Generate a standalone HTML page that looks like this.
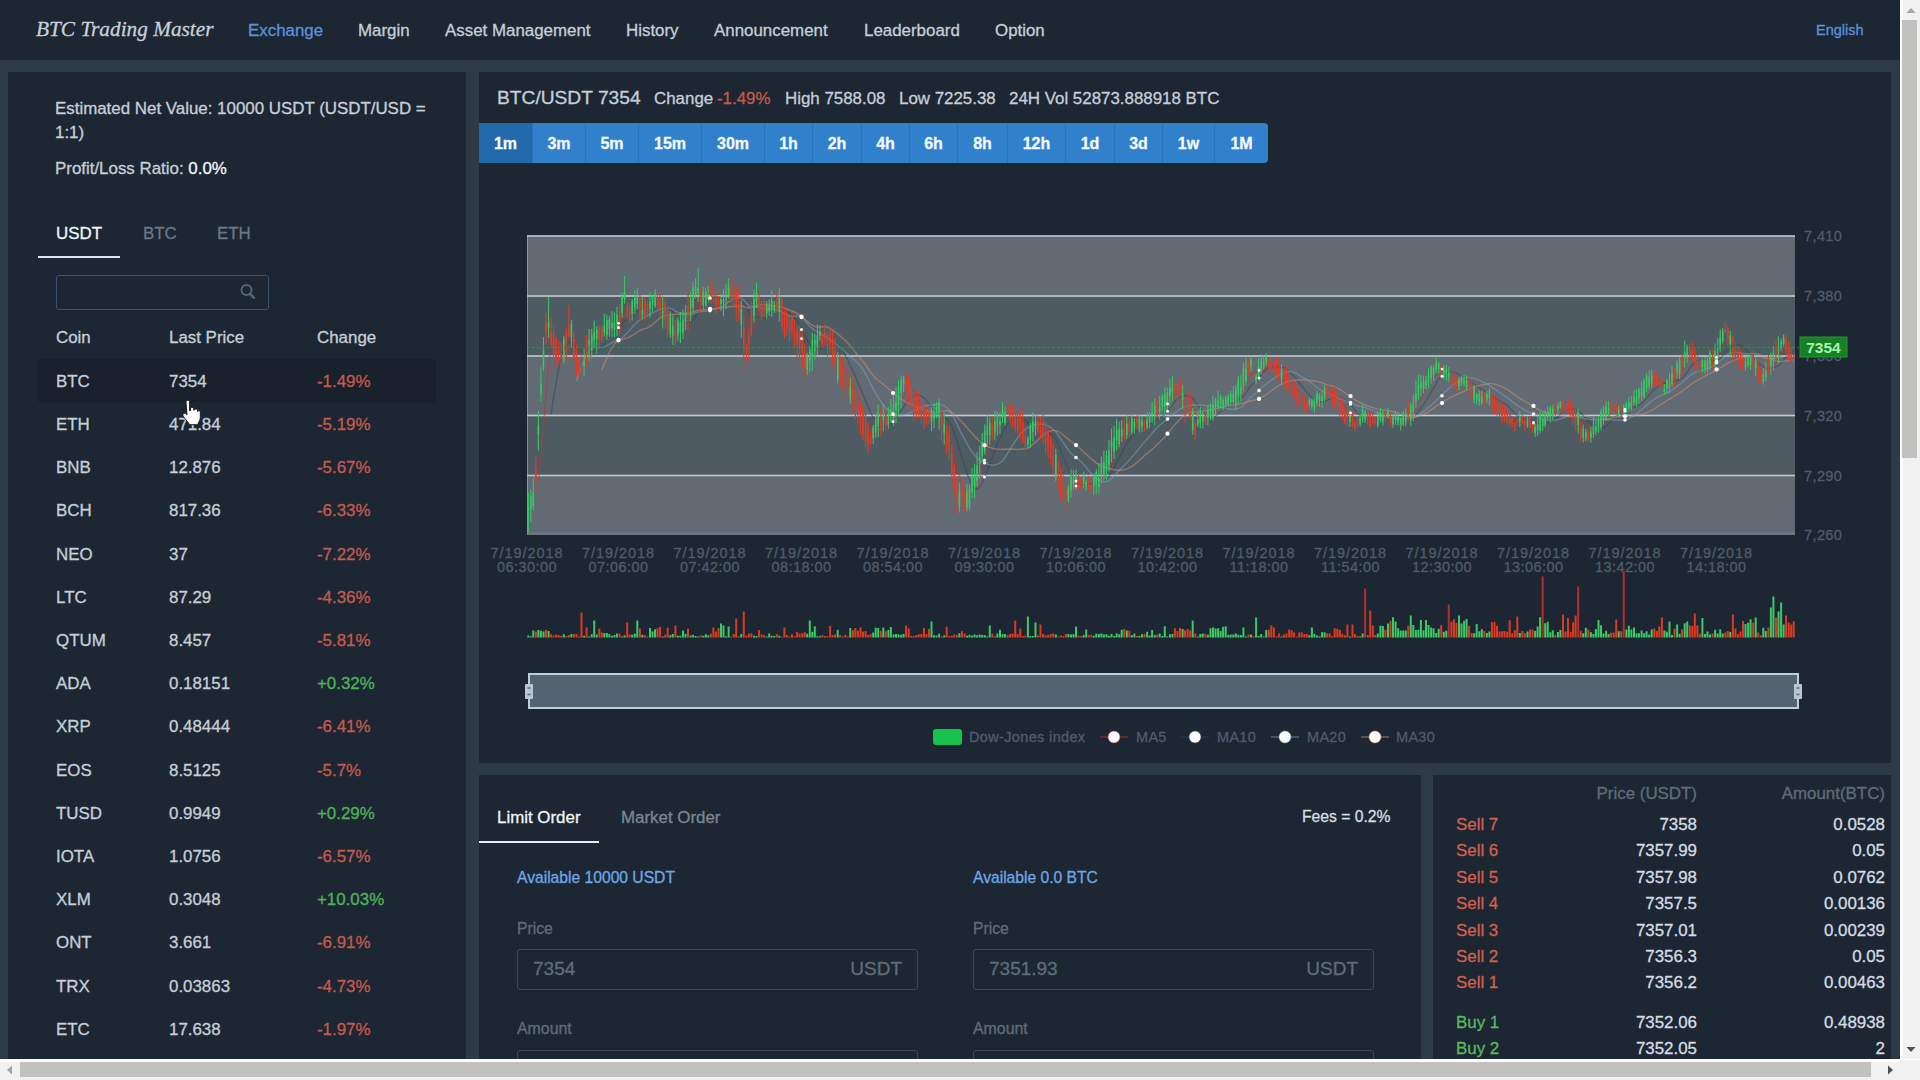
<!DOCTYPE html>
<html lang="en">
<head>
<meta charset="utf-8">
<title>BTC Trading Master</title>
<style>
*{box-sizing:border-box;margin:0;padding:0}
html,body{width:1920px;height:1080px;overflow:hidden;background:#2d3b46;font-family:"Liberation Sans",sans-serif;color:#c6cfd9;font-size:16.9px;-webkit-text-stroke:0.3px}
.abs{position:absolute}
.t{position:absolute;white-space:nowrap;line-height:20px;height:20px;margin-top:1px}
#page{position:absolute;left:0;top:0;width:1901px;height:1060px;overflow:hidden;background:#2d3b46}
#nav{position:absolute;left:0;top:0;width:1900px;height:60px;background:#1c2733}
.panel{position:absolute;background:#1d2733}
.red{color:#c55a4e}
.grn{color:#4eb35a}
.dim{color:#5f6d7b}
.blue{color:#6ea6e6}
.w{color:#f2f5f8}
.btn{position:absolute;top:0;height:40px;line-height:41px;text-align:center;color:#f4f8fc;font-weight:bold;font-size:16px;border-right:1px solid #2a72b8}
.inp{position:absolute;height:41px;border:1px solid #3a4a5e;border-radius:3px}
.inp span{position:absolute;top:8px;font-size:19px;line-height:22px;color:#5f6d7b}
.r{text-align:right}
</style>
</head>
<body>
<div id="page">
<div id="nav">
<div class="t" style="left:36px;top:16px;font-family:'Liberation Serif',serif;font-style:italic;font-size:21.3px;line-height:24px;height:24px;color:#c9d0da">BTC Trading Master</div>
<div class="t" style="left:248px;top:20px;color:#5b92da">Exchange</div>
<div class="t" style="left:358px;top:20px">Margin</div>
<div class="t" style="left:445px;top:20px">Asset Management</div>
<div class="t" style="left:626px;top:20px">History</div>
<div class="t" style="left:714px;top:20px">Announcement</div>
<div class="t" style="left:864px;top:20px">Leaderboard</div>
<div class="t" style="left:995px;top:20px">Option</div>
<div class="t" style="left:1816px;top:19px;font-size:14.5px;color:#5b92da">English</div>
</div>
<div class="panel" style="left:8px;top:72px;width:458px;height:1000px">
<div class="t " style="left:47px;top:26.0px;">Estimated Net Value: 10000 USDT (USDT/USD =</div>
<div class="t " style="left:47px;top:50.0px;">1:1)</div>
<div class="t " style="left:47px;top:86.0px;">Profit/Loss Ratio: <span class="w">0.0%</span></div>
<div class="t w" style="left:48px;top:151.0px;">USDT</div>
<div class="t " style="left:135px;top:151.0px;color:#6b7886">BTC</div>
<div class="t " style="left:209px;top:151.0px;color:#6b7886">ETH</div>
<div class="abs" style="left:30px;top:184px;width:82px;height:2px;background:#dfe5eb"></div>
<div class="abs" style="left:48px;top:203px;width:213px;height:35px;border:1px solid #3c5274;border-radius:3px"></div>
<svg class="abs" style="left:230px;top:210px" width="20" height="20" viewBox="0 0 20 20"><circle cx="8.5" cy="8" r="5" fill="none" stroke="#53657c" stroke-width="2"/><path d="M12 11.8 L16 15.8" stroke="#53657c" stroke-width="2.4" stroke-linecap="round"/></svg>
<div class="t " style="left:48px;top:255.0px;">Coin</div>
<div class="t " style="left:161px;top:255.0px;">Last Price</div>
<div class="t " style="left:309px;top:255.0px;">Change</div>
<div class="abs" style="left:30px;top:287px;width:398px;height:43px;background:#18212c"></div>
<div class="t " style="left:48px;top:298.8px;">BTC</div>
<div class="t " style="left:161px;top:298.8px;">7354</div>
<div class="t red" style="left:309px;top:298.8px;">-1.49%</div>
<div class="t " style="left:48px;top:342.0px;">ETH</div>
<div class="t " style="left:161px;top:342.0px;">471.84</div>
<div class="t red" style="left:309px;top:342.0px;">-5.19%</div>
<div class="t " style="left:48px;top:385.2px;">BNB</div>
<div class="t " style="left:161px;top:385.2px;">12.876</div>
<div class="t red" style="left:309px;top:385.2px;">-5.67%</div>
<div class="t " style="left:48px;top:428.4px;">BCH</div>
<div class="t " style="left:161px;top:428.4px;">817.36</div>
<div class="t red" style="left:309px;top:428.4px;">-6.33%</div>
<div class="t " style="left:48px;top:471.6px;">NEO</div>
<div class="t " style="left:161px;top:471.6px;">37</div>
<div class="t red" style="left:309px;top:471.6px;">-7.22%</div>
<div class="t " style="left:48px;top:514.8px;">LTC</div>
<div class="t " style="left:161px;top:514.8px;">87.29</div>
<div class="t red" style="left:309px;top:514.8px;">-4.36%</div>
<div class="t " style="left:48px;top:558.0px;">QTUM</div>
<div class="t " style="left:161px;top:558.0px;">8.457</div>
<div class="t red" style="left:309px;top:558.0px;">-5.81%</div>
<div class="t " style="left:48px;top:601.2px;">ADA</div>
<div class="t " style="left:161px;top:601.2px;">0.18151</div>
<div class="t grn" style="left:309px;top:601.2px;">+0.32%</div>
<div class="t " style="left:48px;top:644.4px;">XRP</div>
<div class="t " style="left:161px;top:644.4px;">0.48444</div>
<div class="t red" style="left:309px;top:644.4px;">-6.41%</div>
<div class="t " style="left:48px;top:687.6px;">EOS</div>
<div class="t " style="left:161px;top:687.6px;">8.5125</div>
<div class="t red" style="left:309px;top:687.6px;">-5.7%</div>
<div class="t " style="left:48px;top:730.8px;">TUSD</div>
<div class="t " style="left:161px;top:730.8px;">0.9949</div>
<div class="t grn" style="left:309px;top:730.8px;">+0.29%</div>
<div class="t " style="left:48px;top:774.0px;">IOTA</div>
<div class="t " style="left:161px;top:774.0px;">1.0756</div>
<div class="t red" style="left:309px;top:774.0px;">-6.57%</div>
<div class="t " style="left:48px;top:817.2px;">XLM</div>
<div class="t " style="left:161px;top:817.2px;">0.3048</div>
<div class="t grn" style="left:309px;top:817.2px;">+10.03%</div>
<div class="t " style="left:48px;top:860.4px;">ONT</div>
<div class="t " style="left:161px;top:860.4px;">3.661</div>
<div class="t red" style="left:309px;top:860.4px;">-6.91%</div>
<div class="t " style="left:48px;top:903.6px;">TRX</div>
<div class="t " style="left:161px;top:903.6px;">0.03863</div>
<div class="t red" style="left:309px;top:903.6px;">-4.73%</div>
<div class="t " style="left:48px;top:946.8px;">ETC</div>
<div class="t " style="left:161px;top:946.8px;">17.638</div>
<div class="t red" style="left:309px;top:946.8px;">-1.97%</div>
</div>
<svg class="abs" style="left:180px;top:399px" width="24" height="30" viewBox="0 0 24 32" preserveAspectRatio="none"><path d="M6 3.2c0-1.1.8-1.9 1.8-1.9s1.8.8 1.8 1.9v9.3l.9-.1v-1.7c0-1 .7-1.7 1.6-1.7s1.6.7 1.6 1.7v1.2l.6 0c.2-.8.8-1.3 1.6-1.3.9 0 1.6.7 1.6 1.7v1c.2-.5.7-.8 1.3-.8.9 0 1.5.7 1.5 1.7v5.6c0 1.7-.4 3.1-1.2 4.400l-1 1.700v1.500h-9.300v-1.500l-4.100-5.400c-1-1.300-1.800-2.600-1.800-3.600 0-1 .8-1.600 1.700-1.600.7 0 1.300.3 1.900.9l.5.600z" fill="#fff" stroke="#1a1a1a" stroke-width="1"/></svg>
<div class="panel" id="chartp" style="left:479px;top:72px;width:1412px;height:691px">
<div class="t " style="left:18px;top:15.0px;font-size:19.2px;line-height:24px;height:24px;margin-top:-1px">BTC/USDT 7354</div>
<div class="t " style="left:175px;top:16.0px;">Change</div>
<div class="t red" style="left:238px;top:16.0px;">-1.49%</div>
<div class="t " style="left:306px;top:16.0px;">High 7588.08</div>
<div class="t " style="left:420px;top:16.0px;">Low 7225.38</div>
<div class="t " style="left:530px;top:16.0px;">24H Vol 52873.888918 BTC</div>
<div class="abs" style="left:0;top:51px;width:789px;height:40px;background:#3080cc;border-radius:0 4px 4px 0;overflow:hidden">
<div class="btn" style="left:0px;width:54px;background:#236aad;">1m</div>
<div class="btn" style="left:54px;width:53px;">3m</div>
<div class="btn" style="left:107px;width:53px;">5m</div>
<div class="btn" style="left:160px;width:63px;">15m</div>
<div class="btn" style="left:223px;width:63px;">30m</div>
<div class="btn" style="left:286px;width:48px;">1h</div>
<div class="btn" style="left:334px;width:49px;">2h</div>
<div class="btn" style="left:383px;width:48px;">4h</div>
<div class="btn" style="left:431px;width:48px;">6h</div>
<div class="btn" style="left:479px;width:50px;">8h</div>
<div class="btn" style="left:529px;width:58px;">12h</div>
<div class="btn" style="left:587px;width:49px;">1d</div>
<div class="btn" style="left:636px;width:48px;">3d</div>
<div class="btn" style="left:684px;width:52px;">1w</div>
<div class="btn" style="left:736px;width:53px;border-right:none;">1M</div>
</div>
<svg class="abs" style="left:0;top:0" width="1411" height="691" viewBox="0 0 1411 691" font-family="Liberation Sans, sans-serif">
<rect x="48.0" y="164.0" width="1268.0" height="60.0" fill="#626a74"/>
<rect x="48.0" y="224.0" width="1268.0" height="60.0" fill="#4f5b62"/>
<rect x="48.0" y="284.0" width="1268.0" height="59.5" fill="#626a74"/>
<rect x="48.0" y="343.5" width="1268.0" height="60.0" fill="#4f5b62"/>
<rect x="48.0" y="403.5" width="1268.0" height="59.5" fill="#626a74"/>
<rect x="48.0" y="163.2" width="1268.0" height="1.6" fill="#c3cbd2"/>
<rect x="48.0" y="223.2" width="1268.0" height="1.6" fill="#c3cbd2"/>
<rect x="48.0" y="283.2" width="1268.0" height="1.6" fill="#c3cbd2"/>
<rect x="48.0" y="342.7" width="1268.0" height="1.6" fill="#c3cbd2"/>
<rect x="48.0" y="402.7" width="1268.0" height="1.6" fill="#c3cbd2"/>
<rect x="48.0" y="164.0" width="1" height="299" fill="#aeb8c2" opacity="0.55"/>
<rect x="48.0" y="460.5" width="1268.0" height="2" fill="#7b8692" opacity="0.6"/>
<text x="1325.0" y="169.0" font-size="14.5" fill="#4f5d6b" stroke="#4f5d6b" stroke-width="0.3" letter-spacing="0.4">7,410</text>
<text x="1325.0" y="229.0" font-size="14.5" fill="#4f5d6b" stroke="#4f5d6b" stroke-width="0.3" letter-spacing="0.4">7,380</text>
<text x="1325.0" y="289.0" font-size="14.5" fill="#4f5d6b" stroke="#4f5d6b" stroke-width="0.3" letter-spacing="0.4">7,350</text>
<text x="1325.0" y="348.5" font-size="14.5" fill="#4f5d6b" stroke="#4f5d6b" stroke-width="0.3" letter-spacing="0.4">7,320</text>
<text x="1325.0" y="408.5" font-size="14.5" fill="#4f5d6b" stroke="#4f5d6b" stroke-width="0.3" letter-spacing="0.4">7,290</text>
<text x="1325.0" y="468.0" font-size="14.5" fill="#4f5d6b" stroke="#4f5d6b" stroke-width="0.3" letter-spacing="0.4">7,260</text>
<text x="48.0" y="486.0" font-size="14.5" fill="#4f5d6b" stroke="#4f5d6b" stroke-width="0.3" text-anchor="middle" letter-spacing="0.95">7/19/2018</text>
<text x="48.0" y="500.0" font-size="14.5" fill="#4f5d6b" stroke="#4f5d6b" stroke-width="0.3" text-anchor="middle" letter-spacing="0.45">06:30:00</text>
<text x="139.5" y="486.0" font-size="14.5" fill="#4f5d6b" stroke="#4f5d6b" stroke-width="0.3" text-anchor="middle" letter-spacing="0.95">7/19/2018</text>
<text x="139.5" y="500.0" font-size="14.5" fill="#4f5d6b" stroke="#4f5d6b" stroke-width="0.3" text-anchor="middle" letter-spacing="0.45">07:06:00</text>
<text x="231.0" y="486.0" font-size="14.5" fill="#4f5d6b" stroke="#4f5d6b" stroke-width="0.3" text-anchor="middle" letter-spacing="0.95">7/19/2018</text>
<text x="231.0" y="500.0" font-size="14.5" fill="#4f5d6b" stroke="#4f5d6b" stroke-width="0.3" text-anchor="middle" letter-spacing="0.45">07:42:00</text>
<text x="322.5" y="486.0" font-size="14.5" fill="#4f5d6b" stroke="#4f5d6b" stroke-width="0.3" text-anchor="middle" letter-spacing="0.95">7/19/2018</text>
<text x="322.5" y="500.0" font-size="14.5" fill="#4f5d6b" stroke="#4f5d6b" stroke-width="0.3" text-anchor="middle" letter-spacing="0.45">08:18:00</text>
<text x="414.0" y="486.0" font-size="14.5" fill="#4f5d6b" stroke="#4f5d6b" stroke-width="0.3" text-anchor="middle" letter-spacing="0.95">7/19/2018</text>
<text x="414.0" y="500.0" font-size="14.5" fill="#4f5d6b" stroke="#4f5d6b" stroke-width="0.3" text-anchor="middle" letter-spacing="0.45">08:54:00</text>
<text x="505.5" y="486.0" font-size="14.5" fill="#4f5d6b" stroke="#4f5d6b" stroke-width="0.3" text-anchor="middle" letter-spacing="0.95">7/19/2018</text>
<text x="505.5" y="500.0" font-size="14.5" fill="#4f5d6b" stroke="#4f5d6b" stroke-width="0.3" text-anchor="middle" letter-spacing="0.45">09:30:00</text>
<text x="597.0" y="486.0" font-size="14.5" fill="#4f5d6b" stroke="#4f5d6b" stroke-width="0.3" text-anchor="middle" letter-spacing="0.95">7/19/2018</text>
<text x="597.0" y="500.0" font-size="14.5" fill="#4f5d6b" stroke="#4f5d6b" stroke-width="0.3" text-anchor="middle" letter-spacing="0.45">10:06:00</text>
<text x="688.5" y="486.0" font-size="14.5" fill="#4f5d6b" stroke="#4f5d6b" stroke-width="0.3" text-anchor="middle" letter-spacing="0.95">7/19/2018</text>
<text x="688.5" y="500.0" font-size="14.5" fill="#4f5d6b" stroke="#4f5d6b" stroke-width="0.3" text-anchor="middle" letter-spacing="0.45">10:42:00</text>
<text x="780.0" y="486.0" font-size="14.5" fill="#4f5d6b" stroke="#4f5d6b" stroke-width="0.3" text-anchor="middle" letter-spacing="0.95">7/19/2018</text>
<text x="780.0" y="500.0" font-size="14.5" fill="#4f5d6b" stroke="#4f5d6b" stroke-width="0.3" text-anchor="middle" letter-spacing="0.45">11:18:00</text>
<text x="871.5" y="486.0" font-size="14.5" fill="#4f5d6b" stroke="#4f5d6b" stroke-width="0.3" text-anchor="middle" letter-spacing="0.95">7/19/2018</text>
<text x="871.5" y="500.0" font-size="14.5" fill="#4f5d6b" stroke="#4f5d6b" stroke-width="0.3" text-anchor="middle" letter-spacing="0.45">11:54:00</text>
<text x="963.0" y="486.0" font-size="14.5" fill="#4f5d6b" stroke="#4f5d6b" stroke-width="0.3" text-anchor="middle" letter-spacing="0.95">7/19/2018</text>
<text x="963.0" y="500.0" font-size="14.5" fill="#4f5d6b" stroke="#4f5d6b" stroke-width="0.3" text-anchor="middle" letter-spacing="0.45">12:30:00</text>
<text x="1054.5" y="486.0" font-size="14.5" fill="#4f5d6b" stroke="#4f5d6b" stroke-width="0.3" text-anchor="middle" letter-spacing="0.95">7/19/2018</text>
<text x="1054.5" y="500.0" font-size="14.5" fill="#4f5d6b" stroke="#4f5d6b" stroke-width="0.3" text-anchor="middle" letter-spacing="0.45">13:06:00</text>
<text x="1146.0" y="486.0" font-size="14.5" fill="#4f5d6b" stroke="#4f5d6b" stroke-width="0.3" text-anchor="middle" letter-spacing="0.95">7/19/2018</text>
<text x="1146.0" y="500.0" font-size="14.5" fill="#4f5d6b" stroke="#4f5d6b" stroke-width="0.3" text-anchor="middle" letter-spacing="0.45">13:42:00</text>
<text x="1237.5" y="486.0" font-size="14.5" fill="#4f5d6b" stroke="#4f5d6b" stroke-width="0.3" text-anchor="middle" letter-spacing="0.95">7/19/2018</text>
<text x="1237.5" y="500.0" font-size="14.5" fill="#4f5d6b" stroke="#4f5d6b" stroke-width="0.3" text-anchor="middle" letter-spacing="0.45">14:18:00</text>
<path d="M59.4 409.5L61.9 385.2L64.5 355.8L67.0 323.1L69.6 294.0L72.1 274.7L74.6 266.2L77.2 265.2L79.7 269.3L82.2 275.7L84.8 279.2L87.3 279.3L89.8 275.3L92.4 272.1L94.9 270.3L97.5 271.9L100.0 276.6L102.5 284.3L105.1 289.8L107.6 290.0L110.1 287.2L112.7 281.8L115.2 274.8L117.7 269.8L120.3 266.6L122.8 264.1L125.3 261.5L127.9 259.6L130.4 257.2L133.0 255.6L135.5 254.0L138.0 252.8L140.6 251.3L143.1 247.4L145.6 241.9L148.2 238.8L150.7 237.1L153.2 235.5L155.8 235.1L158.3 235.7L160.9 235.2L163.4 234.7L165.9 234.4L168.5 235.3L171.0 236.5L173.5 235.7L176.1 233.6L178.6 232.2L181.1 231.1L183.7 232.2L186.2 234.9L188.7 238.5L191.3 243.1L193.8 248.1L196.4 252.3L198.9 254.6L201.4 256.3L204.0 255.8L206.5 253.8L209.0 249.4L211.6 244.9L214.1 238.7L216.6 232.3L219.2 226.7L221.7 223.9L224.3 223.0L226.8 223.9L229.3 225.3L231.9 225.9L234.4 225.3L236.9 225.6L239.5 226.0L242.0 226.7L244.5 228.1L247.1 228.4L249.6 225.9L252.1 223.8L254.7 222.7L257.2 223.0L259.8 224.6L262.3 230.3L264.8 239.0L267.4 249.8L269.9 257.9L272.4 261.3L275.0 258.4L277.5 251.1L280.0 241.7L282.6 234.9L285.1 231.9L287.7 233.0L290.2 235.3L292.7 235.4L295.3 235.1L297.8 234.4L300.3 233.8L302.9 235.2L305.4 239.6L307.9 243.3L310.5 248.4L313.0 252.8L315.5 255.9L318.1 258.8L320.6 262.4L323.2 266.7L325.7 273.5L328.2 280.1L330.8 283.6L333.3 285.0L335.8 284.3L338.4 279.7L340.9 273.2L343.4 269.4L346.0 266.4L348.5 265.5L351.1 266.1L353.6 269.2L356.1 273.2L358.7 279.0L361.2 284.7L363.7 291.4L366.3 297.5L368.8 302.9L371.3 308.0L373.9 312.7L376.4 317.9L378.9 323.8L381.5 330.2L384.0 337.2L386.6 344.3L389.1 351.6L391.6 357.4L394.2 361.0L396.7 361.3L399.2 359.5L401.8 356.4L404.3 352.3L406.8 348.8L409.4 347.4L411.9 345.2L414.5 342.7L417.0 339.9L419.5 335.6L422.1 329.7L424.6 324.4L427.1 319.1L429.7 315.9L432.2 315.1L434.7 318.0L437.3 322.3L439.8 327.3L442.3 332.1L444.9 336.5L447.4 339.3L450.0 341.3L452.5 343.4L455.0 344.0L457.6 342.9L460.1 342.4L462.6 343.5L465.2 345.4L467.7 350.1L470.2 357.0L472.8 366.5L475.3 378.3L477.9 391.7L480.4 403.3L482.9 412.8L485.5 420.3L488.0 423.8L490.5 424.1L493.1 421.8L495.6 419.6L498.1 414.1L500.7 406.5L503.2 397.1L505.7 388.2L508.3 378.4L510.8 369.7L513.4 363.7L515.9 359.1L518.4 355.2L521.0 353.6L523.5 350.7L526.0 348.0L528.6 345.0L531.1 343.2L533.6 341.8L536.2 342.7L538.7 344.3L541.3 346.7L543.8 350.1L546.3 354.7L548.9 359.1L551.4 361.4L553.9 362.1L556.5 361.8L559.0 358.7L561.5 356.1L564.1 355.2L566.6 357.3L569.1 359.9L571.7 365.4L574.2 372.0L576.8 378.9L579.3 386.8L581.8 395.6L584.4 404.0L586.9 410.7L589.4 416.5L592.0 418.0L594.5 417.0L597.0 414.1L599.6 411.2L602.1 409.1L604.7 408.3L607.2 409.3L609.7 410.9L612.3 412.4L614.8 412.6L617.3 412.8L619.9 411.6L622.4 408.8L624.9 404.9L627.5 400.9L630.0 395.8L632.5 389.2L635.1 383.4L637.6 376.9L640.2 371.2L642.7 366.6L645.2 363.1L647.8 359.8L650.3 358.2L652.8 355.8L655.4 354.2L657.9 352.8L660.4 352.2L663.0 351.8L665.5 352.1L668.1 351.3L670.6 351.2L673.1 349.1L675.7 346.5L678.2 342.8L680.7 340.7L683.3 337.2L685.8 334.9L688.3 331.9L690.9 329.1L693.4 324.8L695.9 321.9L698.5 319.9L701.0 318.2L703.6 318.8L706.1 323.0L708.6 325.3L711.2 328.5L713.7 334.7L716.2 341.5L718.8 343.9L721.3 347.6L723.8 349.9L726.4 349.1L728.9 345.5L731.5 343.6L734.0 341.5L736.5 338.5L739.1 335.6L741.6 333.6L744.1 332.3L746.7 330.9L749.2 330.2L751.7 329.8L754.3 328.7L756.8 327.5L759.3 325.4L761.9 322.9L764.4 318.3L767.0 313.7L769.5 306.9L772.0 301.5L774.6 299.4L777.1 299.5L779.6 298.4L782.2 298.7L784.7 298.4L787.2 295.3L789.8 292.7L792.3 292.1L794.9 292.2L797.4 293.0L799.9 295.0L802.5 296.9L805.0 299.3L807.5 301.3L810.1 305.1L812.6 308.9L815.1 312.3L817.7 315.8L820.2 320.7L822.7 323.0L825.3 325.6L827.8 328.9L830.4 330.4L832.9 331.2L835.4 332.8L838.0 332.1L840.5 330.4L843.0 329.4L845.6 326.9L848.1 324.1L850.6 322.2L853.2 321.3L855.7 321.4L858.3 323.4L860.8 326.2L863.3 330.2L865.9 334.3L868.4 338.0L870.9 340.9L873.5 343.5L876.0 346.6L878.5 348.0L881.1 348.9L883.6 348.1L886.1 348.0L888.7 346.2L891.2 345.8L893.8 345.8L896.3 347.3L898.8 347.8L901.4 347.3L903.9 346.7L906.4 345.6L909.0 344.2L911.5 344.1L914.0 345.7L916.6 345.9L919.1 346.9L921.7 348.5L924.2 348.5L926.7 347.2L929.3 346.0L931.8 345.1L934.3 342.5L936.9 337.8L939.4 332.0L941.9 326.7L944.5 320.1L947.0 314.8L949.5 311.3L952.1 308.5L954.6 305.8L957.2 302.3L959.7 299.0L962.2 297.1L964.8 296.9L967.3 296.8L969.8 298.7L972.4 301.2L974.9 303.4L977.4 305.5L980.0 307.9L982.5 309.3L985.1 310.0L987.6 310.6L990.1 311.1L992.7 312.4L995.2 315.1L997.7 318.4L1000.3 321.5L1002.8 323.9L1005.3 325.3L1007.9 325.8L1010.4 325.3L1012.9 325.7L1015.5 327.2L1018.0 329.2L1020.6 331.6L1023.1 335.2L1025.6 338.0L1028.2 340.0L1030.7 342.7L1033.2 345.2L1035.8 347.6L1038.3 349.1L1040.8 349.8L1043.4 349.6L1045.9 350.1L1048.5 349.4L1051.0 349.6L1053.5 351.1L1056.1 352.8L1058.6 353.2L1061.1 353.1L1063.7 352.8L1066.2 351.1L1068.7 348.0L1071.3 345.3L1073.8 343.1L1076.3 340.5L1078.9 338.6L1081.4 336.8L1084.0 335.6L1086.5 334.8L1089.0 334.6L1091.6 335.2L1094.1 337.0L1096.6 339.6L1099.2 342.5L1101.7 347.3L1104.2 351.7L1106.8 355.8L1109.3 358.9L1111.9 361.7L1114.4 361.1L1116.9 359.9L1119.5 357.9L1122.0 354.8L1124.5 350.3L1127.1 347.4L1129.6 344.0L1132.1 340.9L1134.7 338.8L1137.2 337.6L1139.7 337.1L1142.3 337.1L1144.8 337.3L1147.4 337.1L1149.9 336.4L1152.4 335.3L1155.0 333.1L1157.5 330.9L1160.0 328.7L1162.6 325.8L1165.1 322.5L1167.6 318.9L1170.2 315.2L1172.7 311.6L1175.3 309.4L1177.8 307.9L1180.3 308.1L1182.9 308.7L1185.4 311.1L1187.9 312.3L1190.5 313.0L1193.0 312.0L1195.5 310.6L1198.1 306.4L1200.6 303.0L1203.1 299.0L1205.7 294.3L1208.2 289.6L1210.8 285.7L1213.3 282.3L1215.8 281.2L1218.4 283.7L1220.9 286.4L1223.4 289.2L1226.0 292.0L1228.5 292.9L1231.0 291.9L1233.6 290.3L1236.1 288.5L1238.7 285.4L1241.2 280.7L1243.7 275.8L1246.3 270.0L1248.8 266.0L1251.3 264.7L1253.9 266.6L1256.4 270.3L1258.9 275.3L1261.5 280.2L1264.0 284.6L1266.5 287.5L1269.1 289.1L1271.6 290.5L1274.2 290.7L1276.7 291.2L1279.2 293.1L1281.8 296.3L1284.3 299.0L1286.8 301.7L1289.4 301.2L1291.9 299.1L1294.4 295.3L1297.0 290.4L1299.5 285.6L1302.1 281.8L1304.6 277.4L1307.1 274.7L1309.7 274.7L1312.2 275.8L1314.7 277.9" fill="none" stroke="#c23531" stroke-width="1.4" stroke-opacity="0.5" stroke-linejoin="round"/>
<path d="M72.1 342.1L74.6 325.7L77.2 310.5L79.7 296.2L82.2 284.9L84.8 276.9L87.3 272.7L89.8 270.3L92.4 270.7L94.9 273.0L97.5 275.6L100.0 277.9L102.5 279.8L105.1 280.9L107.6 280.2L110.1 279.6L112.7 279.2L115.2 279.5L117.7 279.8L120.3 278.3L122.8 275.7L125.3 271.6L127.9 267.2L130.4 263.5L133.0 261.1L135.5 259.0L138.0 257.2L140.6 255.4L143.1 252.3L145.6 248.7L148.2 246.4L150.7 244.9L153.2 243.4L155.8 241.2L158.3 238.8L160.9 237.0L163.4 235.9L165.9 234.9L168.5 235.2L171.0 236.1L173.5 235.4L176.1 234.2L178.6 233.3L181.1 233.2L183.7 234.4L186.2 235.3L188.7 236.1L191.3 237.7L193.8 239.6L196.4 242.3L198.9 244.8L201.4 247.4L204.0 249.5L206.5 251.0L209.0 250.8L211.6 249.8L214.1 247.5L216.6 244.0L219.2 240.2L221.7 236.7L224.3 234.0L226.8 231.3L229.3 228.8L231.9 226.3L234.4 224.6L236.9 224.3L239.5 224.9L242.0 226.0L244.5 227.0L247.1 226.8L249.6 225.8L252.1 224.9L254.7 224.7L257.2 225.5L259.8 226.5L262.3 228.1L264.8 231.4L267.4 236.2L269.9 240.5L272.4 243.0L275.0 244.4L277.5 245.0L280.0 245.7L282.6 246.4L285.1 246.6L287.7 245.7L290.2 243.2L292.7 238.5L295.3 235.0L297.8 233.2L300.3 233.4L302.9 235.3L305.4 237.5L307.9 239.2L310.5 241.4L313.0 243.3L315.5 245.6L318.1 249.2L320.6 252.9L323.2 257.5L325.7 263.1L328.2 268.0L330.8 271.2L333.3 273.7L335.8 275.5L338.4 276.6L340.9 276.6L343.4 276.5L346.0 275.7L348.5 274.9L351.1 272.9L353.6 271.2L356.1 271.3L358.7 272.7L361.2 275.1L363.7 278.7L366.3 283.4L368.8 288.0L371.3 293.5L373.9 298.7L376.4 304.6L378.9 310.7L381.5 316.6L384.0 322.6L386.6 328.5L389.1 334.7L391.6 340.6L394.2 345.6L396.7 349.2L399.2 351.9L401.8 354.0L404.3 354.8L406.8 354.9L409.4 354.3L411.9 352.3L414.5 349.5L417.0 346.1L419.5 342.2L422.1 338.5L424.6 334.8L427.1 330.9L429.7 327.9L432.2 325.4L434.7 323.8L437.3 323.3L439.8 323.2L442.3 324.0L444.9 325.8L447.4 328.6L450.0 331.8L452.5 335.3L455.0 338.0L457.6 339.7L460.1 340.8L462.6 342.4L465.2 344.4L467.7 347.0L470.2 350.0L472.8 354.5L475.3 360.9L477.9 368.5L480.4 376.7L482.9 384.9L485.5 393.4L488.0 401.0L490.5 407.9L493.1 412.5L495.6 416.2L498.1 417.2L500.7 415.1L503.2 410.6L505.7 405.0L508.3 399.0L510.8 391.9L513.4 385.1L515.9 378.1L518.4 371.7L521.0 366.0L523.5 360.2L526.0 355.8L528.6 352.0L531.1 349.2L533.6 347.7L536.2 346.7L538.7 346.1L541.3 345.8L543.8 346.7L546.3 348.2L548.9 350.9L551.4 352.8L553.9 354.4L556.5 356.0L559.0 356.7L561.5 357.6L564.1 358.3L566.6 359.7L569.1 360.9L571.7 362.1L574.2 364.0L576.8 367.0L579.3 372.1L581.8 377.8L584.4 384.7L586.9 391.3L589.4 397.7L592.0 402.4L594.5 406.3L597.0 409.0L599.6 410.9L602.1 412.8L604.7 413.1L607.2 413.2L609.7 412.5L612.3 411.8L614.8 410.9L617.3 410.5L619.9 410.4L622.4 409.8L624.9 408.6L627.5 406.7L630.0 404.3L632.5 400.4L635.1 396.1L637.6 390.9L640.2 386.1L642.7 381.2L645.2 376.1L647.8 371.6L650.3 367.6L652.8 363.5L655.4 360.4L657.9 358.0L660.4 356.0L663.0 355.0L665.5 354.0L668.1 352.8L670.6 352.0L673.1 350.6L675.7 349.1L678.2 347.5L680.7 346.0L683.3 344.2L685.8 342.0L688.3 339.2L690.9 336.0L693.4 332.8L695.9 329.5L698.5 327.4L701.0 325.1L703.6 324.0L706.1 323.9L708.6 323.6L711.2 324.2L713.7 326.5L716.2 330.2L718.8 333.4L721.3 336.5L723.8 339.2L726.4 341.9L728.9 343.5L731.5 343.7L734.0 344.6L736.5 344.2L739.1 342.3L741.6 339.5L744.1 337.9L746.7 336.2L749.2 334.3L751.7 332.7L754.3 331.2L756.8 329.9L759.3 328.2L761.9 326.6L764.4 324.1L767.0 321.2L769.5 317.2L772.0 313.5L774.6 311.1L777.1 308.9L779.6 306.1L782.2 302.8L784.7 300.0L787.2 297.3L789.8 296.1L792.3 295.3L794.9 295.5L797.4 295.7L799.9 295.1L802.5 294.8L805.0 295.7L807.5 296.7L810.1 299.0L812.6 301.9L815.1 304.6L817.7 307.5L820.2 311.0L822.7 314.0L825.3 317.2L827.8 320.6L830.4 323.1L832.9 325.9L835.4 327.9L838.0 328.8L840.5 329.6L843.0 329.9L845.6 329.0L848.1 328.4L850.6 327.1L853.2 325.8L855.7 325.4L858.3 325.1L860.8 325.1L863.3 326.2L865.9 327.8L868.4 329.7L870.9 332.2L873.5 334.8L876.0 338.4L878.5 341.2L881.1 343.4L883.6 344.5L886.1 345.8L888.7 346.4L891.2 346.9L893.8 347.3L896.3 347.7L898.8 347.9L901.4 346.8L903.9 346.3L906.4 345.7L909.0 345.8L911.5 345.9L914.0 346.5L916.6 346.3L919.1 346.3L921.7 346.4L924.2 346.3L926.7 346.5L929.3 345.9L931.8 346.0L934.3 345.5L936.9 343.2L939.4 339.6L941.9 336.4L944.5 332.6L947.0 328.7L949.5 324.5L952.1 320.2L954.6 316.2L957.2 311.2L959.7 306.9L962.2 304.2L964.8 302.7L967.3 301.3L969.8 300.5L972.4 300.1L974.9 300.3L977.4 301.2L980.0 302.4L982.5 304.0L985.1 305.6L987.6 307.0L990.1 308.3L992.7 310.2L995.2 312.2L997.7 314.2L1000.3 316.0L1002.8 317.5L1005.3 318.9L1007.9 320.4L1010.4 321.8L1012.9 323.6L1015.5 325.6L1018.0 327.3L1020.6 328.7L1023.1 330.3L1025.6 331.8L1028.2 333.6L1030.7 336.0L1033.2 338.4L1035.8 341.4L1038.3 343.6L1040.8 344.9L1043.4 346.2L1045.9 347.6L1048.5 348.5L1051.0 349.4L1053.5 350.5L1056.1 351.2L1058.6 351.6L1061.1 351.2L1063.7 351.2L1066.2 351.1L1068.7 350.4L1071.3 349.2L1073.8 348.1L1076.3 346.6L1078.9 344.9L1081.4 342.4L1084.0 340.4L1086.5 339.0L1089.0 337.5L1091.6 336.9L1094.1 336.9L1096.6 337.6L1099.2 338.7L1101.7 340.9L1104.2 343.4L1106.8 346.4L1109.3 349.3L1111.9 352.1L1114.4 354.2L1116.9 355.8L1119.5 356.8L1122.0 356.8L1124.5 356.0L1127.1 354.2L1129.6 352.0L1132.1 349.4L1134.7 346.8L1137.2 344.0L1139.7 342.2L1142.3 340.6L1144.8 339.1L1147.4 337.9L1149.9 337.0L1152.4 336.2L1155.0 335.1L1157.5 334.1L1160.0 332.9L1162.6 331.1L1165.1 328.9L1167.6 326.0L1170.2 323.0L1172.7 320.2L1175.3 317.6L1177.8 315.2L1180.3 313.5L1182.9 312.0L1185.4 311.3L1187.9 310.8L1190.5 310.4L1193.0 310.0L1195.5 309.7L1198.1 308.7L1200.6 307.7L1203.1 306.0L1205.7 303.1L1208.2 300.1L1210.8 296.1L1213.3 292.7L1215.8 290.1L1218.4 289.0L1220.9 288.0L1223.4 287.5L1226.0 287.1L1228.5 287.1L1231.0 287.8L1233.6 288.3L1236.1 288.9L1238.7 288.7L1241.2 286.8L1243.7 283.8L1246.3 280.2L1248.8 277.3L1251.3 275.0L1253.9 273.7L1256.4 273.0L1258.9 272.7L1261.5 273.1L1264.0 274.7L1266.5 277.1L1269.1 279.7L1271.6 282.9L1274.2 285.4L1276.7 287.9L1279.2 290.3L1281.8 292.7L1284.3 294.8L1286.8 296.2L1289.4 296.2L1291.9 296.1L1294.4 295.8L1297.0 294.7L1299.5 293.7L1302.1 291.5L1304.6 288.3L1307.1 285.0L1309.7 282.5L1312.2 280.7L1314.7 279.8" fill="none" stroke="#2f4554" stroke-width="1.4" stroke-opacity="0.5" stroke-linejoin="round"/>
<path d="M97.5 308.8L100.0 301.8L102.5 295.2L105.1 288.6L107.6 282.5L110.1 278.2L112.7 275.9L115.2 274.9L117.7 275.3L120.3 275.7L122.8 275.6L125.3 274.8L127.9 273.5L130.4 272.2L133.0 270.6L135.5 269.3L138.0 268.2L140.6 267.5L143.1 266.0L145.6 263.5L148.2 261.0L150.7 258.3L153.2 255.3L155.8 252.4L158.3 249.9L160.9 248.0L163.4 246.5L165.9 245.2L168.5 243.7L171.0 242.4L173.5 240.9L176.1 239.6L178.6 238.3L181.1 237.2L183.7 236.6L186.2 236.1L188.7 236.0L191.3 236.3L193.8 237.4L196.4 239.2L198.9 240.1L201.4 240.8L204.0 241.4L206.5 242.1L209.0 242.6L211.6 242.5L214.1 241.8L216.6 240.9L219.2 239.9L221.7 239.5L224.3 239.4L226.8 239.3L229.3 239.1L231.9 238.6L234.4 237.7L236.9 237.0L239.5 236.2L242.0 235.0L244.5 233.6L247.1 231.8L249.6 229.9L252.1 228.1L254.7 226.7L257.2 225.9L259.8 225.6L262.3 226.2L264.8 228.1L267.4 231.1L269.9 233.7L272.4 234.9L275.0 235.1L277.5 234.9L280.0 235.2L282.6 236.0L285.1 236.6L287.7 236.9L290.2 237.3L292.7 237.4L295.3 237.7L297.8 238.1L300.3 238.9L302.9 240.1L305.4 241.6L307.9 242.8L310.5 244.0L313.0 244.5L315.5 244.4L318.1 243.9L320.6 243.9L323.2 245.4L325.7 248.3L328.2 251.6L330.8 254.3L333.3 256.4L335.8 258.5L338.4 259.9L340.9 261.1L343.4 262.8L346.0 264.3L348.5 266.2L351.1 268.0L353.6 269.6L356.1 271.2L358.7 273.2L361.2 275.3L363.7 277.7L366.3 280.0L368.8 282.3L371.3 284.6L373.9 286.8L376.4 288.8L378.9 291.0L381.5 293.9L384.0 297.7L386.6 301.8L389.1 306.7L391.6 312.0L394.2 316.8L396.7 321.4L399.2 325.3L401.8 329.3L404.3 332.8L406.8 335.8L409.4 338.5L411.9 340.4L414.5 342.1L417.0 343.3L419.5 343.9L422.1 343.9L424.6 343.3L427.1 342.4L429.7 341.4L432.2 340.1L434.7 339.1L437.3 337.8L439.8 336.4L442.3 335.0L444.9 334.0L447.4 333.6L450.0 333.3L452.5 333.1L455.0 333.0L457.6 332.5L460.1 332.3L462.6 332.9L465.2 333.8L467.7 335.5L470.2 337.9L472.8 341.5L475.3 346.4L477.9 351.9L480.4 357.4L482.9 362.3L485.5 367.1L488.0 371.7L490.5 376.1L493.1 379.8L495.6 383.1L498.1 385.8L500.7 388.0L503.2 389.6L505.7 390.8L508.3 392.0L510.8 392.6L513.4 393.1L515.9 393.0L518.4 392.1L521.0 391.1L523.5 388.7L526.0 385.5L528.6 381.3L531.1 377.1L533.6 373.3L536.2 369.3L538.7 365.6L541.3 362.0L543.8 359.2L546.3 357.1L548.9 355.6L551.4 354.3L553.9 353.2L556.5 352.6L559.0 352.2L561.5 352.2L564.1 352.2L566.6 352.8L569.1 353.8L571.7 355.1L574.2 357.5L576.8 359.9L579.3 363.2L581.8 366.9L584.4 370.7L586.9 374.5L589.4 378.0L592.0 381.1L594.5 383.6L597.0 385.5L599.6 387.5L602.1 389.9L604.7 392.6L607.2 395.5L609.7 398.6L612.3 401.5L614.8 404.3L617.3 406.5L619.9 408.4L622.4 409.4L624.9 409.8L627.5 409.8L630.0 408.7L632.5 406.8L635.1 404.3L637.6 401.3L640.2 398.5L642.7 395.9L645.2 393.3L647.8 390.7L650.3 388.1L652.8 385.1L655.4 382.4L657.9 379.2L660.4 376.0L663.0 372.9L665.5 370.0L668.1 367.0L670.6 364.1L673.1 361.1L675.7 358.3L678.2 355.5L680.7 353.2L683.3 351.1L685.8 349.0L688.3 347.1L690.9 345.0L693.4 342.8L695.9 340.8L698.5 339.0L701.0 337.1L703.6 335.7L706.1 335.0L708.6 333.9L711.2 333.1L713.7 332.8L716.2 333.1L718.8 333.1L721.3 333.0L723.8 333.3L726.4 333.5L728.9 333.7L731.5 333.8L734.0 334.1L736.5 334.2L739.1 334.4L741.6 334.8L744.1 335.7L746.7 336.3L749.2 336.8L751.7 337.3L754.3 337.3L756.8 336.8L759.3 336.4L761.9 335.4L764.4 333.2L767.0 330.4L769.5 327.6L772.0 324.8L774.6 322.7L777.1 320.8L779.6 318.6L782.2 316.3L784.7 314.1L787.2 311.9L789.8 310.1L792.3 308.2L794.9 306.3L797.4 304.6L799.9 303.1L802.5 301.9L805.0 300.9L807.5 299.8L810.1 299.5L812.6 299.6L815.1 300.4L817.7 301.4L820.2 303.2L822.7 304.9L825.3 306.2L827.8 307.7L830.4 309.4L832.9 311.3L835.4 313.5L838.0 315.4L840.5 317.1L843.0 318.7L845.6 320.0L848.1 321.2L850.6 322.2L853.2 323.2L855.7 324.2L858.3 325.5L860.8 326.5L863.3 327.5L865.9 328.7L868.4 329.8L870.9 330.6L873.5 331.6L876.0 332.7L878.5 333.5L881.1 334.4L883.6 334.8L886.1 335.5L888.7 336.3L891.2 337.4L893.8 338.5L896.3 339.9L898.8 341.4L901.4 342.6L903.9 343.7L906.4 344.6L909.0 345.1L911.5 345.8L914.0 346.4L916.6 346.6L919.1 346.8L921.7 347.0L924.2 347.1L926.7 346.6L929.3 346.1L931.8 345.9L934.3 345.6L936.9 344.5L939.4 343.1L941.9 341.3L944.5 339.4L947.0 337.5L949.5 335.4L952.1 333.4L954.6 331.1L957.2 328.6L959.7 326.2L962.2 323.7L964.8 321.1L967.3 318.8L969.8 316.6L972.4 314.4L974.9 312.4L977.4 310.7L980.0 309.3L982.5 307.6L985.1 306.3L987.6 305.6L990.1 305.5L992.7 305.7L995.2 306.3L997.7 307.1L1000.3 308.1L1002.8 309.4L1005.3 310.6L1007.9 312.2L1010.4 313.7L1012.9 315.3L1015.5 316.9L1018.0 318.7L1020.6 320.4L1023.1 322.2L1025.6 323.9L1028.2 325.6L1030.7 327.4L1033.2 329.4L1035.8 331.6L1038.3 333.6L1040.8 335.2L1043.4 336.7L1045.9 338.2L1048.5 339.4L1051.0 340.6L1053.5 342.0L1056.1 343.6L1058.6 345.0L1061.1 346.3L1063.7 347.4L1066.2 348.0L1068.7 348.3L1071.3 348.4L1073.8 348.3L1076.3 348.0L1078.9 347.7L1081.4 346.8L1084.0 346.0L1086.5 345.1L1089.0 344.4L1091.6 344.0L1094.1 343.7L1096.6 343.4L1099.2 343.4L1101.7 343.8L1104.2 344.1L1106.8 344.4L1109.3 344.8L1111.9 345.5L1114.4 345.9L1116.9 346.3L1119.5 346.9L1122.0 347.2L1124.5 347.3L1127.1 347.6L1129.6 347.7L1132.1 347.9L1134.7 348.0L1137.2 348.0L1139.7 348.2L1142.3 348.2L1144.8 348.0L1147.4 347.4L1149.9 346.5L1152.4 345.2L1155.0 343.5L1157.5 341.8L1160.0 339.8L1162.6 337.5L1165.1 335.6L1167.6 333.3L1170.2 331.1L1172.7 329.0L1175.3 327.3L1177.8 325.7L1180.3 324.3L1182.9 323.0L1185.4 322.1L1187.9 321.0L1190.5 319.7L1193.0 318.0L1195.5 316.4L1198.1 314.4L1200.6 312.6L1203.1 310.6L1205.7 308.3L1208.2 306.0L1210.8 303.7L1213.3 301.8L1215.8 300.3L1218.4 299.5L1220.9 298.8L1223.4 298.1L1226.0 297.4L1228.5 296.5L1231.0 295.4L1233.6 294.2L1236.1 292.5L1238.7 290.7L1241.2 288.5L1243.7 286.4L1246.3 284.1L1248.8 282.4L1251.3 281.1L1253.9 280.4L1256.4 280.4L1258.9 280.5L1261.5 281.0L1264.0 281.7L1266.5 281.9L1269.1 281.8L1271.6 281.5L1274.2 281.4L1276.7 281.5L1279.2 282.0L1281.8 282.9L1284.3 283.7L1286.8 284.7L1289.4 285.4L1291.9 286.6L1294.4 287.7L1297.0 288.8L1299.5 289.5L1302.1 289.7L1304.6 289.3L1307.1 288.8L1309.7 288.7L1312.2 288.4L1314.7 288.0" fill="none" stroke="#7aa6c2" stroke-width="1.4" stroke-opacity="0.5" stroke-linejoin="round"/>
<path d="M122.8 297.8L125.3 291.8L127.9 285.8L130.4 280.2L133.0 275.4L135.5 271.8L138.0 269.7L140.6 268.4L143.1 267.6L145.6 266.7L148.2 265.9L150.7 264.8L153.2 263.4L155.8 261.9L158.3 260.0L160.9 258.5L163.4 257.4L165.9 256.6L168.5 255.8L171.0 254.4L173.5 252.5L176.1 250.3L178.6 247.9L181.1 246.0L183.7 244.7L186.2 243.8L188.7 243.0L191.3 242.7L193.8 242.4L196.4 242.4L198.9 242.2L201.4 242.2L204.0 242.0L206.5 241.8L209.0 241.3L211.6 240.7L214.1 239.8L216.6 238.9L219.2 238.3L221.7 238.3L224.3 238.0L226.8 237.6L229.3 237.2L231.9 236.8L234.4 236.6L236.9 236.5L239.5 236.1L242.0 235.9L244.5 235.6L247.1 235.3L249.6 234.8L252.1 234.5L254.7 234.3L257.2 234.3L259.8 234.0L262.3 234.1L264.8 234.6L267.4 235.4L269.9 235.9L272.4 235.5L275.0 234.7L277.5 233.7L280.0 233.1L282.6 232.7L285.1 232.6L287.7 232.7L290.2 233.2L292.7 233.6L295.3 234.1L297.8 234.3L300.3 234.5L302.9 235.0L305.4 236.0L307.9 237.0L310.5 238.2L313.0 239.0L315.5 240.0L318.1 241.3L320.6 242.8L323.2 244.6L325.7 247.0L328.2 249.4L330.8 251.5L333.3 253.1L335.8 254.5L338.4 255.2L340.9 255.1L343.4 254.7L346.0 254.5L348.5 255.2L351.1 256.5L353.6 258.2L356.1 260.0L358.7 261.9L361.2 264.0L363.7 266.2L366.3 268.5L368.8 271.2L371.3 274.0L373.9 277.1L376.4 280.2L378.9 283.3L381.5 286.4L384.0 289.7L386.6 293.0L389.1 296.7L391.6 300.2L394.2 303.4L396.7 306.2L399.2 308.5L401.8 310.5L404.3 312.2L406.8 314.3L409.4 316.6L411.9 318.7L414.5 321.0L417.0 323.4L419.5 325.3L422.1 327.1L424.6 328.5L427.1 329.8L429.7 331.1L432.2 332.3L434.7 333.6L437.3 334.7L439.8 335.8L442.3 336.9L444.9 337.9L447.4 338.8L450.0 339.5L452.5 340.1L455.0 340.2L457.6 340.0L460.1 339.7L462.6 339.4L465.2 339.0L467.7 339.0L470.2 339.3L472.8 340.5L475.3 342.5L477.9 344.9L480.4 347.5L482.9 350.0L485.5 352.7L488.0 355.6L490.5 358.5L493.1 361.2L495.6 364.0L498.1 366.8L500.7 369.3L503.2 371.5L505.7 373.2L508.3 374.5L510.8 375.4L513.4 376.2L515.9 376.8L518.4 377.1L521.0 377.4L523.5 377.3L526.0 377.3L528.6 377.1L531.1 377.0L533.6 377.2L536.2 377.3L538.7 377.4L541.3 377.3L543.8 377.0L546.3 376.8L548.9 376.1L551.4 374.6L553.9 372.3L556.5 370.1L559.0 367.8L561.5 365.4L564.1 363.2L566.6 361.2L569.1 359.8L571.7 358.8L574.2 358.4L576.8 358.6L579.3 359.5L581.8 361.0L584.4 363.0L586.9 365.2L589.4 367.4L592.0 369.3L594.5 371.3L597.0 373.1L599.6 375.3L602.1 377.6L604.7 379.9L607.2 382.3L609.7 384.6L612.3 386.9L614.8 388.9L617.3 390.9L619.9 392.5L622.4 393.6L624.9 394.5L627.5 395.5L630.0 396.5L632.5 397.1L635.1 397.8L637.6 398.0L640.2 398.2L642.7 398.1L645.2 397.6L647.8 396.8L650.3 395.7L652.8 394.4L655.4 392.6L657.9 390.5L660.4 388.2L663.0 385.9L665.5 383.6L668.1 381.5L670.6 379.5L673.1 377.4L675.7 375.1L678.2 372.6L680.7 370.2L683.3 367.5L685.8 364.7L688.3 361.7L690.9 358.7L693.4 355.6L695.9 352.6L698.5 349.9L701.0 347.3L703.6 345.0L706.1 343.4L708.6 341.9L711.2 340.7L713.7 340.2L716.2 340.0L718.8 339.7L721.3 339.3L723.8 339.1L726.4 338.7L728.9 338.3L731.5 337.9L734.0 337.5L736.5 336.8L739.1 336.0L741.6 335.2L744.1 334.7L746.7 334.1L749.2 333.6L751.7 333.2L754.3 332.9L756.8 332.5L759.3 332.1L761.9 331.7L764.4 331.0L767.0 330.3L769.5 329.5L772.0 328.7L774.6 328.2L777.1 327.8L779.6 326.9L782.2 325.5L784.7 324.2L787.2 322.7L789.8 320.8L792.3 318.7L794.9 316.9L797.4 315.1L799.9 313.5L802.5 312.1L805.0 311.0L807.5 309.8L810.1 309.1L812.6 308.6L815.1 308.3L817.7 308.0L820.2 307.9L822.7 307.7L825.3 307.8L827.8 308.1L830.4 308.3L832.9 308.5L835.4 309.0L838.0 309.4L840.5 310.1L843.0 310.9L845.6 311.8L848.1 312.7L850.6 313.2L853.2 313.8L855.7 314.7L858.3 315.9L860.8 317.3L863.3 319.0L865.9 320.7L868.4 322.4L870.9 324.1L873.5 325.8L876.0 327.6L878.5 329.2L881.1 330.6L883.6 331.9L886.1 332.9L888.7 333.8L891.2 334.8L893.8 335.6L896.3 336.3L898.8 337.1L901.4 337.4L903.9 337.8L906.4 338.2L909.0 338.5L911.5 338.9L914.0 339.7L916.6 340.3L919.1 341.1L921.7 342.1L924.2 343.0L926.7 343.9L929.3 344.5L931.8 345.0L934.3 345.3L936.9 345.0L939.4 344.2L941.9 343.2L944.5 342.1L947.0 340.9L949.5 339.6L952.1 337.8L954.6 336.1L957.2 334.3L959.7 332.7L962.2 331.1L964.8 329.6L967.3 328.0L969.8 326.5L972.4 325.0L974.9 323.7L977.4 322.6L980.0 321.5L982.5 320.4L985.1 319.3L987.6 318.1L990.1 316.9L992.7 315.9L995.2 315.1L997.7 314.3L1000.3 313.6L1002.8 313.0L1005.3 312.5L1007.9 311.9L1010.4 311.4L1012.9 311.6L1015.5 312.2L1018.0 312.9L1020.6 313.8L1023.1 314.8L1025.6 316.0L1028.2 317.4L1030.7 319.1L1033.2 320.9L1035.8 323.0L1038.3 324.7L1040.8 326.3L1043.4 327.9L1045.9 329.5L1048.5 331.0L1051.0 332.4L1053.5 333.9L1056.1 335.4L1058.6 336.8L1061.1 338.2L1063.7 339.5L1066.2 340.5L1068.7 341.3L1071.3 341.9L1073.8 342.3L1076.3 342.6L1078.9 343.0L1081.4 343.2L1084.0 343.5L1086.5 343.9L1089.0 344.1L1091.6 344.3L1094.1 344.5L1096.6 344.8L1099.2 345.1L1101.7 345.7L1104.2 346.2L1106.8 346.7L1109.3 347.1L1111.9 347.4L1114.4 347.6L1116.9 347.9L1119.5 348.1L1122.0 347.9L1124.5 347.6L1127.1 347.3L1129.6 346.8L1132.1 346.1L1134.7 345.5L1137.2 345.0L1139.7 344.6L1142.3 344.4L1144.8 344.3L1147.4 344.1L1149.9 343.9L1152.4 343.8L1155.0 343.5L1157.5 343.3L1160.0 343.0L1162.6 342.4L1165.1 341.8L1167.6 340.8L1170.2 339.7L1172.7 338.3L1175.3 336.9L1177.8 335.2L1180.3 333.5L1182.9 331.8L1185.4 330.3L1187.9 328.6L1190.5 327.2L1193.0 325.5L1195.5 323.9L1198.1 322.3L1200.6 320.8L1203.1 319.1L1205.7 317.2L1208.2 315.4L1210.8 313.4L1213.3 311.5L1215.8 309.8L1218.4 308.3L1220.9 306.9L1223.4 305.4L1226.0 304.1L1228.5 302.7L1231.0 301.5L1233.6 300.1L1236.1 298.7L1238.7 297.4L1241.2 295.8L1243.7 294.3L1246.3 292.6L1248.8 291.2L1251.3 289.9L1253.9 288.9L1256.4 288.0L1258.9 287.0L1261.5 286.0L1264.0 285.3L1266.5 284.7L1269.1 284.2L1271.6 283.7L1274.2 283.4L1276.7 283.4L1279.2 283.7L1281.8 284.5L1284.3 285.3L1286.8 286.1L1289.4 286.5L1291.9 286.7L1294.4 286.4L1297.0 285.9L1299.5 285.5L1302.1 284.8L1304.6 284.1L1307.1 283.6L1309.7 283.3L1312.2 283.3L1314.7 283.6" fill="none" stroke="#d9926f" stroke-width="1.4" stroke-opacity="0.5" stroke-linejoin="round"/>
<path d="M56.9 384.5V418.9M67.0 240.6V273.1M72.1 246.6V276.4M74.6 253.2V285.9M77.2 265.8V295.8M79.7 269.6V289.3M82.2 271.0V294.7M87.3 255.9V288.5M89.8 233.0V265.7M94.9 259.7V291.3M97.5 272.4V304.7M100.0 286.0V306.1M102.5 289.7V314.2M107.6 262.8V294.4M120.3 253.3V274.1M122.8 253.6V270.6M140.6 232.0V263.1M148.2 229.7V247.7M150.7 232.8V251.5M160.9 221.5V249.6M165.9 225.0V248.5M168.5 227.9V245.0M178.6 219.3V236.9M181.1 220.7V243.8M186.2 226.2V255.8M188.7 234.8V265.8M196.4 247.2V274.6M209.0 218.7V258.6M221.7 216.2V240.4M231.9 208.0V231.7M234.4 212.0V231.7M236.9 218.5V241.7M239.5 224.0V237.0M252.1 206.0V230.2M254.7 206.5V236.0M257.2 217.4V249.7M259.8 212.7V248.5M264.8 246.2V300.0M267.4 271.8V287.1M269.9 257.2V290.8M272.4 229.1V264.6M280.0 221.1V239.0M282.6 228.9V248.2M285.1 227.8V244.9M297.8 219.0V239.7M302.9 224.7V258.4M305.4 235.0V266.5M307.9 237.3V263.8M310.5 246.1V270.4M313.0 240.3V265.6M315.5 248.0V275.0M318.1 253.8V287.6M320.6 252.7V284.9M323.2 258.6V295.1M325.7 272.1V304.3M343.4 259.6V275.5M346.0 251.8V273.0M348.5 259.5V284.6M351.1 256.4V280.8M353.6 259.1V292.9M356.1 266.0V298.5M361.2 285.1V312.7M363.7 284.3V316.2M366.3 288.8V325.4M368.8 295.1V328.0M373.9 304.1V341.4M376.4 312.6V347.4M378.9 317.1V351.6M381.5 330.2V363.0M384.0 333.9V368.6M386.6 340.2V374.9M389.1 350.7V380.2M391.6 358.9V373.0M401.8 334.7V363.9M406.8 339.2V358.8M427.1 300.5V320.3M429.7 303.1V332.4M432.2 306.2V338.5M434.7 319.4V350.0M437.3 319.2V347.3M439.8 318.1V345.4M442.3 326.7V352.0M444.9 329.8V357.5M447.4 336.3V353.5M450.0 336.8V352.0M462.6 333.2V369.1M467.7 353.5V382.0M470.2 354.3V388.1M472.8 372.4V410.6M475.3 391.4V421.6M477.9 403.9V441.3M482.9 406.9V431.4M485.5 418.4V440.0M513.4 344.6V367.0M528.6 329.3V343.0M531.1 333.8V350.7M533.6 331.0V356.0M536.2 337.0V360.4M538.7 336.6V361.7M541.3 336.1V367.1M543.8 341.9V371.5M546.3 356.6V376.3M559.0 343.4V360.3M561.5 345.1V366.9M564.1 342.7V370.8M566.6 350.3V381.8M569.1 354.0V386.0M571.7 364.2V392.4M574.2 372.0V402.4M579.3 389.8V416.8M581.8 395.6V428.6M584.4 407.7V434.6M586.9 413.7V442.0M599.6 403.0V416.7M602.1 405.5V419.1M609.7 403.7V419.6M612.3 406.3V420.3M645.2 345.9V368.5M650.3 343.7V365.4M657.9 343.5V358.2M665.5 348.0V359.5M678.2 322.9V346.0M695.9 308.7V327.2M698.5 309.0V329.9M701.0 305.7V332.5M706.1 325.6V351.2M708.6 312.1V339.7M711.2 318.7V347.9M716.2 347.1V368.3M726.4 333.9V353.1M769.5 286.8V303.6M774.6 298.9V310.7M789.8 284.7V300.9M792.3 286.7V299.8M794.9 288.5V301.0M797.4 284.7V304.8M799.9 287.9V310.8M805.0 297.2V314.2M807.5 293.4V316.8M810.1 302.5V323.3M812.6 305.8V329.5M815.1 307.0V328.3M817.7 312.5V334.5M820.2 320.2V336.8M822.7 317.8V332.3M825.3 322.4V339.4M827.8 328.1V341.9M848.1 313.3V327.0M850.6 310.1V325.9M853.2 316.2V333.3M855.7 314.2V337.0M858.3 319.5V341.5M860.8 323.3V344.5M863.3 326.7V348.4M865.9 335.7V352.8M868.4 336.8V354.4M873.5 339.7V355.4M876.0 348.0V359.2M878.5 344.2V355.9M888.7 339.7V352.8M891.2 340.0V356.4M893.8 342.2V353.2M896.3 345.2V352.6M906.4 338.6V349.1M911.5 341.8V353.6M929.3 328.7V350.0M962.2 291.4V304.7M972.4 299.9V315.4M974.9 298.6V318.1M977.4 305.9V318.5M990.1 304.6V325.5M992.7 307.4V329.8M1005.3 320.3V332.8M1012.9 319.1V338.3M1015.5 323.0V342.5M1018.0 325.7V343.7M1020.6 326.9V345.9M1023.1 330.4V350.7M1025.6 332.7V350.5M1028.2 335.8V352.7M1030.7 339.1V355.5M1033.2 344.8V355.9M1035.8 349.9V359.1M1038.3 346.2V353.2M1043.4 343.1V352.2M1045.9 345.3V358.8M1051.0 344.2V356.8M1053.5 349.7V361.2M1076.3 329.4V343.7M1084.0 326.5V342.0M1086.5 331.5V342.7M1089.0 325.2V342.2M1091.6 327.9V345.9M1094.1 333.1V352.8M1096.6 335.7V358.8M1101.7 349.8V370.3M1109.3 356.5V369.7M1132.1 328.0V341.5M1134.7 332.4V341.8M1137.2 331.9V340.4M1142.3 332.8V345.1M1175.3 299.9V313.0M1177.8 300.8V314.4M1180.3 302.4V318.4M1182.9 306.3V315.2M1195.5 296.1V314.7M1203.1 281.2V304.8M1210.8 271.9V285.6M1213.3 269.4V287.7M1215.8 275.0V298.0M1218.4 287.5V306.0M1220.9 287.3V302.1M1233.6 277.1V297.3M1246.3 250.0V261.3M1248.8 253.2V273.0M1253.9 264.0V289.5M1256.4 271.1V296.4M1258.9 273.4V292.4M1261.5 277.4V297.1M1264.0 285.3V298.3M1274.2 278.2V298.4M1279.2 288.2V310.2M1281.8 297.7V312.6M1289.4 283.0V301.8M1297.0 268.4V291.5M1307.1 263.0V282.5M1309.7 269.0V288.5M1312.2 275.3V291.0M1314.7 280.4V291.2" stroke="#e23c26" stroke-width="1.05" fill="none"/>
<path d="M49.3 421.2V460.0M51.8 417.4V449.9M54.3 405.8V438.6M59.4 339.0V378.3M61.9 294.9V329.2M64.5 265.0V298.7M69.6 225.0V265.5M84.8 263.8V291.3M92.4 247.9V275.4M105.1 276.6V303.9M110.1 256.9V289.4M112.7 256.7V286.7M115.2 248.6V274.8M117.7 254.3V281.4M125.3 241.8V264.4M127.9 242.7V268.3M130.4 243.8V264.8M133.0 238.9V264.8M135.5 240.6V265.0M138.0 235.0V263.7M143.1 220.8V245.9M145.6 204.0V231.7M153.2 227.1V248.5M155.8 218.1V241.8M158.3 216.2V237.4M163.4 225.2V247.6M171.0 220.6V246.1M173.5 223.0V239.7M176.1 217.3V236.0M183.7 223.5V256.4M191.3 239.3V265.8M193.8 243.0V272.9M198.9 245.3V268.8M201.4 239.9V271.1M204.0 237.4V266.9M206.5 233.0V258.4M211.6 219.6V249.4M214.1 209.8V240.6M216.6 206.3V226.3M219.2 196.0V229.7M224.3 215.1V237.7M226.8 215.2V235.2M229.3 213.4V230.6M242.0 222.0V238.9M244.5 217.3V244.2M247.1 212.1V237.2M249.6 206.5V226.8M262.3 228.4V265.8M275.0 218.0V250.5M277.5 210.5V236.3M287.7 228.9V246.7M290.2 227.5V244.1M292.7 218.3V244.7M295.3 229.0V241.0M300.3 216.1V249.4M328.2 280.8V303.2M330.8 274.6V300.2M333.3 260.8V298.8M335.8 262.0V287.3M338.4 252.2V284.6M340.9 253.1V268.7M358.7 280.0V311.7M371.3 305.8V332.1M394.2 353.0V372.0M396.7 342.6V365.7M399.2 332.7V365.3M404.3 332.1V359.6M409.4 335.0V356.5M411.9 327.0V349.8M414.5 323.1V354.1M417.0 315.2V351.0M419.5 308.4V343.1M422.1 303.6V336.7M424.6 303.8V320.3M452.5 335.0V359.2M455.0 331.1V356.0M457.6 329.9V346.2M460.1 326.5V357.7M465.2 340.9V372.6M480.4 411.2V440.4M488.0 412.2V438.9M490.5 412.7V438.6M493.1 396.1V426.1M495.6 392.2V426.4M498.1 380.2V414.4M500.7 373.4V407.2M503.2 361.3V389.6M505.7 352.6V382.6M508.3 343.2V373.8M510.8 346.1V372.6M515.9 339.1V368.3M518.4 339.7V363.5M521.0 340.7V361.8M523.5 330.4V351.1M526.0 334.6V353.5M548.9 364.1V376.6M551.4 350.7V375.7M553.9 340.2V369.7M556.5 342.4V363.7M576.8 376.7V408.9M589.4 412.8V430.4M592.0 397.6V425.3M594.5 398.6V417.8M597.0 397.3V417.5M604.7 399.8V416.0M607.2 407.4V418.3M614.8 401.6V422.9M617.3 397.2V421.4M619.9 391.2V421.5M622.4 384.4V411.6M624.9 378.8V409.5M627.5 378.4V408.2M630.0 367.9V399.2M632.5 356.4V390.6M635.1 354.2V387.1M637.6 346.8V378.2M640.2 349.6V375.2M642.7 347.9V370.0M647.8 343.3V367.0M652.8 342.9V362.7M655.4 346.4V361.5M660.4 342.8V360.5M663.0 343.7V360.1M668.1 340.3V357.4M670.6 339.7V356.1M673.1 330.1V350.8M675.7 326.3V353.2M680.7 323.9V347.5M683.3 322.0V339.4M685.8 315.1V344.2M688.3 315.7V340.5M690.9 307.0V334.4M693.4 303.5V329.8M703.6 312.9V337.1M713.7 335.8V362.7M718.8 340.1V355.1M721.3 334.9V356.2M723.8 338.3V356.4M728.9 333.3V352.9M731.5 331.3V348.0M734.0 323.6V348.8M736.5 325.7V342.4M739.1 319.0V336.9M741.6 322.5V336.5M744.1 324.8V338.2M746.7 323.9V334.8M749.2 321.8V334.4M751.7 318.9V333.8M754.3 314.0V332.1M756.8 312.8V338.3M759.3 303.5V331.4M761.9 303.2V329.8M764.4 290.1V319.5M767.0 286.2V314.3M772.0 285.6V299.6M777.1 301.9V311.7M779.6 286.5V306.7M782.2 282.2V302.6M784.7 283.6V297.9M787.2 281.0V293.9M802.5 292.5V312.3M830.4 325.7V334.4M832.9 326.3V337.1M835.4 325.8V340.6M838.0 318.5V334.2M840.5 321.2V334.7M843.0 318.8V336.1M845.6 312.8V329.4M870.9 337.7V355.0M881.1 343.8V354.5M883.6 332.6V350.7M886.1 337.6V351.0M898.8 339.3V355.5M901.4 335.5V350.8M903.9 338.7V353.4M909.0 335.9V346.4M914.0 341.5V355.7M916.6 338.9V352.7M919.1 340.7V353.8M921.7 345.2V358.5M924.2 339.3V354.1M926.7 336.4V354.6M931.8 330.7V353.9M934.3 322.2V349.0M936.9 308.5V336.3M939.4 302.2V327.7M941.9 302.8V324.8M944.5 303.4V321.2M947.0 304.0V317.3M949.5 296.3V316.3M952.1 293.0V311.8M954.6 293.1V309.0M957.2 284.4V301.2M959.7 289.4V301.0M964.8 292.7V307.6M967.3 292.5V308.9M969.8 294.9V310.2M980.0 305.3V318.5M982.5 303.4V313.9M985.1 302.5V314.2M987.6 303.4V318.5M995.2 312.8V331.4M997.7 321.2V332.6M1000.3 318.4V333.4M1002.8 318.5V332.6M1007.9 318.7V331.3M1010.4 316.6V333.5M1040.8 338.7V355.1M1048.5 344.7V355.8M1056.1 352.0V364.9M1058.6 346.2V363.7M1061.1 340.1V361.2M1063.7 340.2V358.7M1066.2 338.3V355.3M1068.7 334.6V348.1M1071.3 333.8V350.4M1073.8 332.7V348.0M1078.9 331.1V341.8M1081.4 329.1V336.7M1099.2 336.4V361.7M1104.2 352.5V370.6M1106.8 357.1V369.0M1111.9 354.6V370.6M1114.4 344.0V365.7M1116.9 347.5V363.3M1119.5 343.8V360.7M1122.0 336.8V358.6M1124.5 333.7V352.7M1127.1 329.7V348.9M1129.6 328.7V344.3M1139.7 333.4V345.2M1144.8 331.7V342.2M1147.4 330.0V341.1M1149.9 325.0V339.0M1152.4 324.1V338.4M1155.0 318.7V333.6M1157.5 317.0V334.8M1160.0 315.6V331.7M1162.6 309.4V329.2M1165.1 306.6V327.0M1167.6 301.1V320.3M1170.2 298.3V317.7M1172.7 297.8V315.5M1185.4 312.1V322.9M1187.9 306.7V321.9M1190.5 300.8V321.0M1193.0 293.7V314.5M1198.1 287.9V306.5M1200.6 284.9V307.0M1205.7 268.7V295.6M1208.2 272.8V290.7M1223.4 286.2V300.4M1226.0 285.0V301.4M1228.5 283.4V300.5M1231.0 278.0V297.9M1236.1 271.6V295.3M1238.7 266.3V290.9M1241.2 257.6V280.1M1243.7 255.9V271.4M1251.3 258.9V285.7M1266.5 284.9V298.7M1269.1 282.2V295.4M1271.6 283.8V298.1M1276.7 285.3V304.1M1284.3 295.9V312.7M1286.8 290.3V309.6M1291.9 280.4V302.7M1294.4 274.1V298.1M1299.5 264.4V290.4M1302.1 266.7V279.6M1304.6 262.2V274.4" stroke="#37c766" stroke-width="1.05" fill="none"/>
<path d="M56.1 397.4h1.6v9.2h-1.6zM66.2 251.1h1.6v8.8h-1.6zM71.3 260.6h1.6v10.2h-1.6zM73.8 261.2h1.6v21.1h-1.6zM76.4 268.8h1.6v19.3h-1.6zM78.9 277.8h1.6v3.0h-1.6zM81.4 281.5h1.6v6.3h-1.6zM86.5 260.0h1.6v20.2h-1.6zM89.0 256.4h1.6v7.5h-1.6zM94.1 266.1h1.6v21.8h-1.6zM96.7 280.0h1.6v13.1h-1.6zM99.2 288.6h1.6v11.9h-1.6zM101.7 295.2h1.6v6.5h-1.6zM106.8 268.4h1.6v15.2h-1.6zM119.5 257.6h1.6v10.0h-1.6zM122.0 255.7h1.6v11.8h-1.6zM139.8 238.9h1.6v19.6h-1.6zM147.4 234.9h1.6v3.4h-1.6zM149.9 239.6h1.6v8.6h-1.6zM160.1 229.7h1.6v8.1h-1.6zM165.1 227.4h1.6v18.2h-1.6zM167.7 231.4h1.6v6.9h-1.6zM177.8 225.9h1.6v9.2h-1.6zM180.3 230.3h1.6v5.8h-1.6zM185.4 231.0h1.6v16.6h-1.6zM187.9 244.1h1.6v14.2h-1.6zM195.6 257.4h1.6v8.8h-1.6zM208.2 234.0h1.6v7.3h-1.6zM220.9 222.3h1.6v8.5h-1.6zM231.1 216.8h1.6v11.9h-1.6zM233.6 214.5h1.6v9.7h-1.6zM236.1 226.0h1.6v6.2h-1.6zM238.7 226.7h1.6v5.5h-1.6zM251.3 215.9h1.6v11.1h-1.6zM253.9 213.5h1.6v13.1h-1.6zM256.4 221.5h1.6v15.4h-1.6zM259.0 231.1h1.6v8.8h-1.6zM264.0 255.3h1.6v17.6h-1.6zM266.6 273.1h1.6v7.0h-1.6zM269.1 265.0h1.6v7.5h-1.6zM271.6 238.8h1.6v20.7h-1.6zM279.2 225.0h1.6v11.8h-1.6zM281.8 235.3h1.6v9.2h-1.6zM284.3 230.7h1.6v7.0h-1.6zM297.0 229.5h1.6v7.0h-1.6zM302.1 228.8h1.6v24.3h-1.6zM304.6 245.6h1.6v17.8h-1.6zM307.1 241.4h1.6v13.6h-1.6zM309.7 249.0h1.6v11.4h-1.6zM312.2 244.3h1.6v13.8h-1.6zM314.7 259.2h1.6v4.3h-1.6zM317.3 257.6h1.6v13.5h-1.6zM319.8 261.6h1.6v14.4h-1.6zM322.4 264.2h1.6v16.2h-1.6zM324.9 278.3h1.6v15.2h-1.6zM342.6 264.3h1.6v6.9h-1.6zM345.2 260.7h1.6v5.0h-1.6zM347.7 263.2h1.6v12.1h-1.6zM350.3 263.2h1.6v10.2h-1.6zM352.8 266.2h1.6v14.6h-1.6zM355.3 278.7h1.6v10.2h-1.6zM360.4 292.7h1.6v13.6h-1.6zM362.9 297.7h1.6v6.6h-1.6zM365.5 306.5h1.6v13.3h-1.6zM368.0 305.7h1.6v10.4h-1.6zM373.1 317.6h1.6v13.6h-1.6zM375.6 324.5h1.6v14.1h-1.6zM378.1 336.1h1.6v4.9h-1.6zM380.7 335.7h1.6v14.3h-1.6zM383.2 339.2h1.6v22.3h-1.6zM385.8 350.6h1.6v18.8h-1.6zM388.3 356.3h1.6v16.0h-1.6zM390.8 365.0h1.6v6.3h-1.6zM401.0 347.6h1.6v12.0h-1.6zM406.0 342.1h1.6v12.5h-1.6zM426.3 308.1h1.6v6.7h-1.6zM428.9 306.2h1.6v14.1h-1.6zM431.4 318.3h1.6v11.7h-1.6zM433.9 323.8h1.6v17.5h-1.6zM436.5 323.1h1.6v11.9h-1.6zM439.0 330.9h1.6v11.8h-1.6zM441.5 336.6h1.6v8.3h-1.6zM444.1 335.7h1.6v11.8h-1.6zM446.6 340.3h1.6v10.2h-1.6zM449.2 339.8h1.6v5.2h-1.6zM461.8 339.3h1.6v17.1h-1.6zM466.9 358.9h1.6v14.2h-1.6zM469.4 363.0h1.6v14.7h-1.6zM472.0 381.9h1.6v21.0h-1.6zM474.5 396.0h1.6v20.4h-1.6zM477.1 412.4h1.6v17.2h-1.6zM482.1 414.6h1.6v9.7h-1.6zM484.7 420.8h1.6v9.1h-1.6zM512.6 353.0h1.6v9.6h-1.6zM527.8 331.8h1.6v9.9h-1.6zM530.3 339.0h1.6v2.1h-1.6zM532.8 342.5h1.6v4.2h-1.6zM535.4 344.9h1.6v11.9h-1.6zM537.9 343.6h1.6v14.3h-1.6zM540.5 340.8h1.6v13.4h-1.6zM543.0 351.3h1.6v16.1h-1.6zM545.5 365.4h1.6v6.1h-1.6zM558.2 348.7h1.6v9.7h-1.6zM560.7 354.8h1.6v7.7h-1.6zM563.3 352.6h1.6v10.5h-1.6zM565.8 359.5h1.6v11.9h-1.6zM568.3 358.9h1.6v16.3h-1.6zM570.9 367.5h1.6v18.9h-1.6zM573.4 384.0h1.6v11.5h-1.6zM578.5 403.8h1.6v3.7h-1.6zM581.0 401.8h1.6v22.6h-1.6zM583.6 413.4h1.6v14.6h-1.6zM586.1 418.4h1.6v7.1h-1.6zM598.8 404.1h1.6v7.3h-1.6zM601.3 406.9h1.6v10.6h-1.6zM608.9 412.4h1.6v3.0h-1.6zM611.5 412.8h1.6v3.3h-1.6zM644.4 355.1h1.6v9.5h-1.6zM649.5 351.1h1.6v5.4h-1.6zM657.1 346.6h1.6v4.2h-1.6zM664.7 351.5h1.6v5.3h-1.6zM677.4 327.6h1.6v15.0h-1.6zM695.1 311.1h1.6v6.5h-1.6zM697.7 311.2h1.6v9.8h-1.6zM700.2 310.6h1.6v10.9h-1.6zM705.3 334.3h1.6v5.4h-1.6zM707.8 324.7h1.6v4.6h-1.6zM710.4 323.8h1.6v20.7h-1.6zM715.4 350.8h1.6v11.9h-1.6zM725.6 342.2h1.6v8.9h-1.6zM768.7 289.8h1.6v7.8h-1.6zM773.8 300.8h1.6v5.3h-1.6zM789.0 289.3h1.6v9.0h-1.6zM791.5 289.0h1.6v6.9h-1.6zM794.1 289.8h1.6v9.1h-1.6zM796.6 293.6h1.6v5.9h-1.6zM799.1 295.0h1.6v10.6h-1.6zM804.2 300.1h1.6v12.0h-1.6zM806.7 296.6h1.6v9.4h-1.6zM809.3 310.6h1.6v7.7h-1.6zM811.8 312.7h1.6v10.2h-1.6zM814.3 312.6h1.6v8.5h-1.6zM816.9 319.7h1.6v7.9h-1.6zM819.4 327.6h1.6v4.3h-1.6zM821.9 323.9h1.6v4.9h-1.6zM824.5 326.4h1.6v7.1h-1.6zM827.0 331.6h1.6v6.9h-1.6zM847.3 315.6h1.6v7.4h-1.6zM849.8 316.5h1.6v7.2h-1.6zM852.4 319.7h1.6v11.2h-1.6zM854.9 317.6h1.6v14.1h-1.6zM857.5 323.8h1.6v9.9h-1.6zM860.0 330.2h1.6v10.4h-1.6zM862.5 335.9h1.6v5.7h-1.6zM865.1 341.8h1.6v8.6h-1.6zM867.6 338.5h1.6v8.3h-1.6zM872.7 343.1h1.6v10.5h-1.6zM875.2 351.3h1.6v4.6h-1.6zM877.7 346.9h1.6v6.5h-1.6zM887.9 342.1h1.6v4.1h-1.6zM890.4 341.8h1.6v12.5h-1.6zM893.0 345.3h1.6v5.4h-1.6zM895.5 346.7h1.6v3.9h-1.6zM905.6 339.5h1.6v6.7h-1.6zM910.7 343.6h1.6v7.3h-1.6zM928.5 337.4h1.6v6.6h-1.6zM961.4 293.6h1.6v7.2h-1.6zM971.6 303.5h1.6v9.4h-1.6zM974.1 306.2h1.6v4.8h-1.6zM976.6 308.6h1.6v5.2h-1.6zM989.3 308.0h1.6v8.6h-1.6zM991.9 317.0h1.6v9.0h-1.6zM1004.5 322.1h1.6v8.4h-1.6zM1012.1 323.9h1.6v12.2h-1.6zM1014.7 331.5h1.6v4.8h-1.6zM1017.2 333.3h1.6v7.0h-1.6zM1019.8 332.6h1.6v8.4h-1.6zM1022.3 333.7h1.6v10.2h-1.6zM1024.8 337.5h1.6v9.9h-1.6zM1027.4 339.8h1.6v9.4h-1.6zM1029.9 345.5h1.6v5.4h-1.6zM1032.4 346.7h1.6v5.8h-1.6zM1035.0 352.2h1.6v3.3h-1.6zM1037.5 347.4h1.6v3.6h-1.6zM1042.6 347.2h1.6v4.0h-1.6zM1045.1 348.2h1.6v6.0h-1.6zM1050.2 346.2h1.6v9.2h-1.6zM1052.7 351.1h1.6v5.3h-1.6zM1075.5 331.1h1.6v6.7h-1.6zM1083.2 329.9h1.6v9.5h-1.6zM1085.7 333.9h1.6v5.4h-1.6zM1088.2 331.9h1.6v5.7h-1.6zM1090.8 332.7h1.6v9.4h-1.6zM1093.3 337.2h1.6v8.7h-1.6zM1095.8 345.2h1.6v4.4h-1.6zM1100.9 354.9h1.6v9.6h-1.6zM1108.5 361.2h1.6v7.0h-1.6zM1131.3 331.5h1.6v6.7h-1.6zM1133.9 334.2h1.6v3.7h-1.6zM1136.4 334.5h1.6v3.8h-1.6zM1141.5 334.2h1.6v5.5h-1.6zM1174.5 304.4h1.6v5.7h-1.6zM1177.0 305.8h1.6v7.4h-1.6zM1179.5 308.3h1.6v5.1h-1.6zM1182.1 308.8h1.6v4.3h-1.6zM1194.7 301.8h1.6v5.4h-1.6zM1202.3 286.2h1.6v7.2h-1.6zM1210.0 275.2h1.6v7.1h-1.6zM1212.5 277.9h1.6v5.9h-1.6zM1215.0 283.1h1.6v8.0h-1.6zM1217.6 288.9h1.6v7.0h-1.6zM1220.1 293.0h1.6v3.2h-1.6zM1232.8 284.7h1.6v2.9h-1.6zM1245.5 256.6h1.6v4.1h-1.6zM1248.0 256.4h1.6v10.6h-1.6zM1253.1 275.8h1.6v7.5h-1.6zM1255.6 276.4h1.6v9.4h-1.6zM1258.1 280.3h1.6v4.9h-1.6zM1260.7 279.4h1.6v10.5h-1.6zM1263.2 287.4h1.6v7.3h-1.6zM1273.4 281.1h1.6v15.2h-1.6zM1278.4 299.2h1.6v4.0h-1.6zM1281.0 300.0h1.6v10.3h-1.6zM1288.6 289.5h1.6v9.7h-1.6zM1296.2 275.8h1.6v6.6h-1.6zM1306.3 267.0h1.6v13.0h-1.6zM1308.9 275.4h1.6v11.1h-1.6zM1311.4 281.4h1.6v8.0h-1.6zM1313.9 282.8h1.6v5.3h-1.6z" fill="#e23c26"/>
<path d="M48.5 435.4h1.6v2.7h-1.6zM51.0 423.8h1.6v13.1h-1.6zM53.5 420.0h1.6v14.2h-1.6zM58.6 353.3h1.6v9.0h-1.6zM61.1 311.8h1.6v9.6h-1.6zM63.7 276.5h1.6v18.4h-1.6zM68.8 250.3h1.6v5.0h-1.6zM84.0 267.3h1.6v20.5h-1.6zM91.6 251.7h1.6v13.5h-1.6zM104.3 288.7h1.6v5.2h-1.6zM109.3 267.8h1.6v6.7h-1.6zM111.9 263.5h1.6v14.7h-1.6zM114.4 260.4h1.6v7.8h-1.6zM116.9 257.7h1.6v9.4h-1.6zM124.5 253.4h1.6v6.6h-1.6zM127.1 248.0h1.6v15.2h-1.6zM129.6 247.4h1.6v9.4h-1.6zM132.2 250.6h1.6v5.4h-1.6zM134.7 250.9h1.6v7.3h-1.6zM137.2 242.4h1.6v8.8h-1.6zM142.3 223.9h1.6v17.2h-1.6zM144.8 220.5h1.6v7.6h-1.6zM152.4 229.6h1.6v12.2h-1.6zM155.0 223.4h1.6v11.8h-1.6zM157.5 225.6h1.6v6.5h-1.6zM162.6 238.1h1.6v4.7h-1.6zM170.2 230.1h1.6v6.8h-1.6zM172.7 224.6h1.6v7.4h-1.6zM175.3 221.3h1.6v12.7h-1.6zM182.9 238.7h1.6v3.2h-1.6zM190.5 244.4h1.6v18.0h-1.6zM193.0 253.4h1.6v10.0h-1.6zM198.1 248.7h1.6v14.9h-1.6zM200.6 250.9h1.6v9.4h-1.6zM203.2 247.6h1.6v13.0h-1.6zM205.7 240.0h1.6v10.2h-1.6zM210.8 227.6h1.6v9.2h-1.6zM213.3 215.4h1.6v20.1h-1.6zM215.8 214.9h1.6v7.5h-1.6zM218.4 216.0h1.6v5.4h-1.6zM223.5 219.5h1.6v14.0h-1.6zM226.0 219.7h1.6v13.5h-1.6zM228.5 223.4h1.6v3.6h-1.6zM241.2 227.3h1.6v5.0h-1.6zM243.7 226.9h1.6v3.7h-1.6zM246.3 222.3h1.6v4.3h-1.6zM248.8 214.3h1.6v10.4h-1.6zM261.5 236.9h1.6v15.6h-1.6zM274.2 226.7h1.6v17.9h-1.6zM276.7 220.4h1.6v10.3h-1.6zM286.9 232.4h1.6v8.7h-1.6zM289.4 233.0h1.6v6.4h-1.6zM291.9 228.8h1.6v8.3h-1.6zM294.5 233.6h1.6v4.0h-1.6zM299.5 226.2h1.6v13.0h-1.6zM327.4 285.6h1.6v12.0h-1.6zM330.0 278.1h1.6v10.9h-1.6zM332.5 268.7h1.6v15.5h-1.6zM335.0 267.9h1.6v11.5h-1.6zM337.6 263.4h1.6v13.0h-1.6zM340.1 259.5h1.6v4.4h-1.6zM357.9 286.8h1.6v20.3h-1.6zM370.5 314.4h1.6v12.5h-1.6zM393.4 355.5h1.6v10.6h-1.6zM395.9 347.6h1.6v12.9h-1.6zM398.4 340.8h1.6v13.5h-1.6zM403.5 342.7h1.6v5.2h-1.6zM408.6 345.3h1.6v7.8h-1.6zM411.1 336.8h1.6v4.3h-1.6zM413.7 332.6h1.6v17.6h-1.6zM416.2 330.3h1.6v8.3h-1.6zM418.7 315.1h1.6v17.8h-1.6zM421.3 308.2h1.6v12.8h-1.6zM423.8 305.4h1.6v6.9h-1.6zM451.7 343.0h1.6v6.4h-1.6zM454.2 340.7h1.6v5.7h-1.6zM456.8 334.7h1.6v4.8h-1.6zM459.3 330.3h1.6v14.9h-1.6zM464.4 351.9h1.6v9.2h-1.6zM479.6 419.5h1.6v15.2h-1.6zM487.2 419.5h1.6v16.3h-1.6zM489.7 416.6h1.6v18.4h-1.6zM492.3 405.1h1.6v15.6h-1.6zM494.8 401.4h1.6v13.8h-1.6zM497.3 393.3h1.6v15.8h-1.6zM499.9 385.3h1.6v6.8h-1.6zM502.4 371.1h1.6v13.2h-1.6zM504.9 358.6h1.6v20.4h-1.6zM507.5 353.9h1.6v9.0h-1.6zM510.0 351.0h1.6v12.3h-1.6zM515.1 349.6h1.6v11.0h-1.6zM517.6 342.5h1.6v10.2h-1.6zM520.2 349.3h1.6v3.5h-1.6zM522.7 338.6h1.6v7.5h-1.6zM525.2 340.2h1.6v10.8h-1.6zM548.1 366.6h1.6v5.9h-1.6zM550.6 354.3h1.6v13.5h-1.6zM553.1 349.7h1.6v10.6h-1.6zM555.7 348.7h1.6v8.4h-1.6zM576.0 383.0h1.6v21.2h-1.6zM588.6 415.8h1.6v12.2h-1.6zM591.2 402.9h1.6v15.7h-1.6zM593.7 405.0h1.6v7.0h-1.6zM596.2 401.9h1.6v5.9h-1.6zM603.9 403.4h1.6v6.8h-1.6zM606.4 409.7h1.6v4.9h-1.6zM614.0 405.8h1.6v8.2h-1.6zM616.5 400.1h1.6v12.2h-1.6zM619.1 405.9h1.6v9.0h-1.6zM621.6 390.8h1.6v11.9h-1.6zM624.1 389.8h1.6v12.4h-1.6zM626.7 383.3h1.6v14.4h-1.6zM629.2 378.1h1.6v15.5h-1.6zM631.7 369.2h1.6v6.6h-1.6zM634.3 366.2h1.6v13.2h-1.6zM636.8 358.3h1.6v10.5h-1.6zM639.4 356.7h1.6v15.4h-1.6zM641.9 357.2h1.6v7.2h-1.6zM647.0 351.7h1.6v11.6h-1.6zM652.0 346.3h1.6v13.7h-1.6zM654.6 349.9h1.6v5.1h-1.6zM659.6 347.2h1.6v10.9h-1.6zM662.2 348.2h1.6v6.7h-1.6zM667.3 347.2h1.6v8.4h-1.6zM669.8 342.8h1.6v7.7h-1.6zM672.3 340.1h1.6v2.4h-1.6zM674.9 333.4h1.6v10.2h-1.6zM679.9 334.9h1.6v5.3h-1.6zM682.5 324.5h1.6v10.0h-1.6zM685.0 322.4h1.6v12.6h-1.6zM687.5 320.6h1.6v13.0h-1.6zM690.1 315.8h1.6v8.3h-1.6zM692.6 315.2h1.6v4.8h-1.6zM702.8 320.8h1.6v7.0h-1.6zM712.9 338.9h1.6v19.3h-1.6zM718.0 347.8h1.6v5.0h-1.6zM720.5 343.5h1.6v6.9h-1.6zM723.0 344.0h1.6v5.1h-1.6zM728.1 338.4h1.6v7.3h-1.6zM730.7 336.6h1.6v9.7h-1.6zM733.2 332.8h1.6v12.6h-1.6zM735.7 327.0h1.6v6.0h-1.6zM738.3 328.4h1.6v6.2h-1.6zM740.8 324.6h1.6v7.8h-1.6zM743.3 327.7h1.6v8.5h-1.6zM745.9 326.5h1.6v5.8h-1.6zM748.4 324.4h1.6v8.1h-1.6zM750.9 322.2h1.6v8.0h-1.6zM753.5 321.5h1.6v8.5h-1.6zM756.0 316.5h1.6v15.2h-1.6zM758.5 308.7h1.6v14.9h-1.6zM761.1 314.8h1.6v7.3h-1.6zM763.6 296.0h1.6v18.5h-1.6zM766.2 296.5h1.6v13.1h-1.6zM771.2 287.2h1.6v7.5h-1.6zM776.3 304.3h1.6v4.5h-1.6zM778.8 295.0h1.6v8.8h-1.6zM781.4 288.9h1.6v9.1h-1.6zM783.9 289.4h1.6v5.3h-1.6zM786.4 284.0h1.6v6.6h-1.6zM801.7 298.1h1.6v8.5h-1.6zM829.6 327.9h1.6v4.3h-1.6zM832.1 328.3h1.6v6.3h-1.6zM834.6 327.4h1.6v8.4h-1.6zM837.2 321.2h1.6v9.5h-1.6zM839.7 323.4h1.6v5.3h-1.6zM842.2 323.9h1.6v5.2h-1.6zM844.8 315.0h1.6v11.4h-1.6zM870.1 343.9h1.6v6.1h-1.6zM880.3 345.9h1.6v5.8h-1.6zM882.8 337.7h1.6v8.7h-1.6zM885.3 340.3h1.6v7.1h-1.6zM898.0 344.8h1.6v8.3h-1.6zM900.6 339.9h1.6v8.3h-1.6zM903.1 342.5h1.6v7.2h-1.6zM908.2 338.0h1.6v5.1h-1.6zM913.2 344.7h1.6v7.8h-1.6zM915.8 344.3h1.6v3.8h-1.6zM918.3 344.9h1.6v5.6h-1.6zM920.9 346.2h1.6v7.2h-1.6zM923.4 341.4h1.6v10.8h-1.6zM925.9 341.5h1.6v8.1h-1.6zM931.0 334.4h1.6v13.7h-1.6zM933.5 332.1h1.6v7.5h-1.6zM936.1 321.7h1.6v8.0h-1.6zM938.6 312.8h1.6v10.8h-1.6zM941.1 310.8h1.6v6.1h-1.6zM943.7 309.0h1.6v7.9h-1.6zM946.2 308.7h1.6v4.6h-1.6zM948.7 302.9h1.6v9.5h-1.6zM951.3 294.9h1.6v11.0h-1.6zM953.8 296.0h1.6v7.0h-1.6zM956.4 291.0h1.6v6.7h-1.6zM958.9 291.4h1.6v5.9h-1.6zM964.0 298.1h1.6v7.2h-1.6zM966.5 296.1h1.6v7.0h-1.6zM969.0 300.3h1.6v4.8h-1.6zM979.2 307.3h1.6v7.1h-1.6zM981.7 305.0h1.6v7.4h-1.6zM984.3 308.2h1.6v3.3h-1.6zM986.8 308.2h1.6v6.8h-1.6zM994.4 316.0h1.6v11.7h-1.6zM996.9 322.9h1.6v5.3h-1.6zM999.5 321.6h1.6v7.5h-1.6zM1002.0 324.0h1.6v6.9h-1.6zM1007.1 321.4h1.6v6.6h-1.6zM1009.6 319.3h1.6v6.1h-1.6zM1040.0 344.7h1.6v5.5h-1.6zM1047.7 346.7h1.6v7.5h-1.6zM1055.3 354.8h1.6v6.1h-1.6zM1057.8 352.6h1.6v6.1h-1.6zM1060.3 342.8h1.6v15.8h-1.6zM1062.9 346.6h1.6v7.6h-1.6zM1065.4 342.3h1.6v10.8h-1.6zM1067.9 339.6h1.6v6.0h-1.6zM1070.5 335.9h1.6v8.2h-1.6zM1073.0 336.6h1.6v5.8h-1.6zM1078.1 334.0h1.6v3.8h-1.6zM1080.6 329.8h1.6v5.8h-1.6zM1098.4 340.5h1.6v12.6h-1.6zM1103.4 356.8h1.6v8.9h-1.6zM1106.0 359.8h1.6v7.0h-1.6zM1111.1 360.5h1.6v5.3h-1.6zM1113.6 353.7h1.6v8.5h-1.6zM1116.1 353.9h1.6v5.4h-1.6zM1118.7 348.6h1.6v9.7h-1.6zM1121.2 339.4h1.6v15.8h-1.6zM1123.7 336.6h1.6v11.4h-1.6zM1126.3 334.1h1.6v12.9h-1.6zM1128.8 336.5h1.6v4.8h-1.6zM1138.9 336.9h1.6v6.4h-1.6zM1144.0 333.3h1.6v7.4h-1.6zM1146.6 332.1h1.6v5.6h-1.6zM1149.1 329.7h1.6v7.5h-1.6zM1151.6 330.3h1.6v6.5h-1.6zM1154.2 324.3h1.6v6.0h-1.6zM1156.7 325.3h1.6v5.4h-1.6zM1159.2 317.5h1.6v8.2h-1.6zM1161.8 315.4h1.6v7.6h-1.6zM1164.3 308.8h1.6v15.9h-1.6zM1166.8 303.5h1.6v12.9h-1.6zM1169.4 305.1h1.6v9.3h-1.6zM1171.9 303.6h1.6v8.6h-1.6zM1184.6 316.9h1.6v3.1h-1.6zM1187.1 308.3h1.6v8.0h-1.6zM1189.7 309.4h1.6v7.1h-1.6zM1192.2 301.0h1.6v10.9h-1.6zM1197.3 291.5h1.6v7.8h-1.6zM1199.8 288.3h1.6v13.9h-1.6zM1204.9 279.7h1.6v5.2h-1.6zM1207.4 274.8h1.6v8.5h-1.6zM1222.6 288.0h1.6v7.3h-1.6zM1225.2 288.5h1.6v9.0h-1.6zM1227.7 286.3h1.6v10.7h-1.6zM1230.2 280.4h1.6v12.4h-1.6zM1235.3 279.0h1.6v13.7h-1.6zM1237.9 276.1h1.6v3.5h-1.6zM1240.4 265.5h1.6v11.7h-1.6zM1242.9 259.0h1.6v10.5h-1.6zM1250.5 263.6h1.6v9.0h-1.6zM1265.7 289.2h1.6v5.7h-1.6zM1268.3 286.2h1.6v6.7h-1.6zM1270.8 285.5h1.6v7.6h-1.6zM1275.9 287.5h1.6v8.9h-1.6zM1283.5 301.8h1.6v8.0h-1.6zM1286.0 298.7h1.6v6.2h-1.6zM1291.1 286.6h1.6v6.6h-1.6zM1293.6 281.6h1.6v7.7h-1.6zM1298.7 274.0h1.6v6.3h-1.6zM1301.3 270.3h1.6v5.8h-1.6zM1303.8 264.9h1.6v7.2h-1.6z" fill="#37c766"/>
<circle cx="139.5" cy="251.3" r="1.4" fill="#fff"/>
<circle cx="139.5" cy="255.4" r="1.5" fill="#fff"/>
<circle cx="139.5" cy="267.5" r="1.8" fill="#fff"/>
<circle cx="139.5" cy="268.4" r="2.1" fill="#fff"/>
<circle cx="231.0" cy="225.9" r="1.4" fill="#fff"/>
<circle cx="231.0" cy="226.3" r="1.5" fill="#fff"/>
<circle cx="231.0" cy="238.6" r="1.8" fill="#fff"/>
<circle cx="231.0" cy="236.8" r="2.1" fill="#fff"/>
<circle cx="322.5" cy="266.7" r="1.4" fill="#fff"/>
<circle cx="322.5" cy="257.5" r="1.5" fill="#fff"/>
<circle cx="322.5" cy="245.4" r="1.8" fill="#fff"/>
<circle cx="322.5" cy="244.6" r="2.1" fill="#fff"/>
<circle cx="414.0" cy="342.7" r="1.4" fill="#fff"/>
<circle cx="414.0" cy="349.5" r="1.5" fill="#fff"/>
<circle cx="414.0" cy="342.1" r="1.8" fill="#fff"/>
<circle cx="414.0" cy="321.0" r="2.1" fill="#fff"/>
<circle cx="505.5" cy="388.2" r="1.4" fill="#fff"/>
<circle cx="505.5" cy="405.0" r="1.5" fill="#fff"/>
<circle cx="505.5" cy="390.8" r="1.8" fill="#fff"/>
<circle cx="505.5" cy="373.2" r="2.1" fill="#fff"/>
<circle cx="597.0" cy="414.1" r="1.4" fill="#fff"/>
<circle cx="597.0" cy="409.0" r="1.5" fill="#fff"/>
<circle cx="597.0" cy="385.5" r="1.8" fill="#fff"/>
<circle cx="597.0" cy="373.1" r="2.1" fill="#fff"/>
<circle cx="688.5" cy="331.9" r="1.4" fill="#fff"/>
<circle cx="688.5" cy="339.2" r="1.5" fill="#fff"/>
<circle cx="688.5" cy="347.1" r="1.8" fill="#fff"/>
<circle cx="688.5" cy="361.7" r="2.1" fill="#fff"/>
<circle cx="780.0" cy="298.4" r="1.4" fill="#fff"/>
<circle cx="780.0" cy="306.1" r="1.5" fill="#fff"/>
<circle cx="780.0" cy="318.6" r="1.8" fill="#fff"/>
<circle cx="780.0" cy="326.9" r="2.1" fill="#fff"/>
<circle cx="871.5" cy="340.9" r="1.4" fill="#fff"/>
<circle cx="871.5" cy="332.2" r="1.5" fill="#fff"/>
<circle cx="871.5" cy="330.6" r="1.8" fill="#fff"/>
<circle cx="871.5" cy="324.1" r="2.1" fill="#fff"/>
<circle cx="963.0" cy="297.1" r="1.4" fill="#fff"/>
<circle cx="963.0" cy="304.2" r="1.5" fill="#fff"/>
<circle cx="963.0" cy="323.7" r="1.8" fill="#fff"/>
<circle cx="963.0" cy="331.1" r="2.1" fill="#fff"/>
<circle cx="1054.5" cy="351.1" r="1.4" fill="#fff"/>
<circle cx="1054.5" cy="350.5" r="1.5" fill="#fff"/>
<circle cx="1054.5" cy="342.0" r="1.8" fill="#fff"/>
<circle cx="1054.5" cy="333.9" r="2.1" fill="#fff"/>
<circle cx="1146.0" cy="337.3" r="1.4" fill="#fff"/>
<circle cx="1146.0" cy="339.1" r="1.5" fill="#fff"/>
<circle cx="1146.0" cy="348.0" r="1.8" fill="#fff"/>
<circle cx="1146.0" cy="344.3" r="2.1" fill="#fff"/>
<circle cx="1237.5" cy="285.4" r="1.4" fill="#fff"/>
<circle cx="1237.5" cy="288.7" r="1.5" fill="#fff"/>
<circle cx="1237.5" cy="290.7" r="1.8" fill="#fff"/>
<circle cx="1237.5" cy="297.4" r="2.1" fill="#fff"/>
<rect x="48.0" y="272.5" width="1268.0" height="8" fill="#1f7a4a" opacity="0.16"/>
<path d="M48.0 275.5H1320.0" stroke="#3f9a5a" stroke-width="1" stroke-dasharray="3 2" opacity="0.55"/>
<rect x="1321.0" y="265.0" width="47" height="20" fill="#187f24" stroke="#259a34" stroke-width="1"/>
<text x="1344.5" y="281.0" font-size="15.5" font-weight="bold" fill="#a4f5ae" text-anchor="middle">7354</text>
<path d="M55.9 565.5v-6.1h2v6.1zM66.0 565.5v-7.6h2v7.6zM71.1 565.5v-3.3h2v3.3zM73.6 565.5v-2.1h2v2.1zM76.2 565.5v-3.1h2v3.1zM78.7 565.5v-2.6h2v2.6zM81.2 565.5v-1.7h2v1.7zM86.3 565.5v-1.6h2v1.6zM88.8 565.5v-2.6h2v2.6zM93.9 565.5v-3.6h2v3.6zM96.5 565.5v-3.6h2v3.6zM99.0 565.5v-0.9h2v0.9zM101.5 565.5v-25.0h2v25.0zM106.6 565.5v-10.0h2v10.0zM119.3 565.5v-9.0h2v9.0zM121.8 565.5v-5.0h2v5.0zM139.6 565.5v-3.9h2v3.9zM147.2 565.5v-15.0h2v15.0zM149.7 565.5v-2.9h2v2.9zM159.9 565.5v-9.0h2v9.0zM164.9 565.5v-2.3h2v2.3zM167.5 565.5v-1.0h2v1.0zM177.6 565.5v-9.3h2v9.3zM180.1 565.5v-10.7h2v10.7zM185.2 565.5v-2.7h2v2.7zM187.7 565.5v-9.8h2v9.8zM195.4 565.5v-11.9h2v11.9zM208.0 565.5v-8.8h2v8.8zM220.7 565.5v-2.2h2v2.2zM230.9 565.5v-3.8h2v3.8zM233.4 565.5v-9.9h2v9.9zM235.9 565.5v-6.0h2v6.0zM238.5 565.5v-9.6h2v9.6zM251.1 565.5v-1.1h2v1.1zM253.7 565.5v-3.6h2v3.6zM256.2 565.5v-19.0h2v19.0zM258.8 565.5v-1.3h2v1.3zM263.8 565.5v-26.0h2v26.0zM266.4 565.5v-1.7h2v1.7zM268.9 565.5v-4.0h2v4.0zM271.4 565.5v-4.1h2v4.1zM279.0 565.5v-7.5h2v7.5zM281.6 565.5v-3.0h2v3.0zM284.1 565.5v-2.6h2v2.6zM296.8 565.5v-3.4h2v3.4zM301.9 565.5v-0.8h2v0.8zM304.4 565.5v-10.0h2v10.0zM306.9 565.5v-2.4h2v2.4zM309.5 565.5v-1.2h2v1.2zM312.0 565.5v-3.3h2v3.3zM314.5 565.5v-1.2h2v1.2zM317.1 565.5v-5.6h2v5.6zM319.6 565.5v-3.7h2v3.7zM322.2 565.5v-4.3h2v4.3zM324.7 565.5v-5.2h2v5.2zM342.4 565.5v-2.6h2v2.6zM345.0 565.5v-1.5h2v1.5zM347.5 565.5v-1.2h2v1.2zM350.1 565.5v-11.6h2v11.6zM352.6 565.5v-2.5h2v2.5zM355.1 565.5v-3.1h2v3.1zM360.2 565.5v-2.6h2v2.6zM362.7 565.5v-1.1h2v1.1zM365.3 565.5v-2.8h2v2.8zM367.8 565.5v-1.0h2v1.0zM372.9 565.5v-7.2h2v7.2zM375.4 565.5v-9.4h2v9.4zM377.9 565.5v-6.7h2v6.7zM380.5 565.5v-10.3h2v10.3zM383.0 565.5v-5.9h2v5.9zM385.6 565.5v-6.5h2v6.5zM388.1 565.5v-2.5h2v2.5zM390.6 565.5v-3.4h2v3.4zM400.8 565.5v-6.8h2v6.8zM405.8 565.5v-6.3h2v6.3zM426.1 565.5v-12.0h2v12.0zM428.7 565.5v-9.0h2v9.0zM431.2 565.5v-1.7h2v1.7zM433.7 565.5v-1.5h2v1.5zM436.3 565.5v-2.5h2v2.5zM438.8 565.5v-3.2h2v3.2zM441.3 565.5v-3.5h2v3.5zM443.9 565.5v-9.6h2v9.6zM446.4 565.5v-3.6h2v3.6zM449.0 565.5v-8.4h2v8.4zM461.6 565.5v-1.1h2v1.1zM466.7 565.5v-10.8h2v10.8zM469.2 565.5v-1.4h2v1.4zM471.8 565.5v-2.0h2v2.0zM474.3 565.5v-2.9h2v2.9zM476.9 565.5v-2.5h2v2.5zM481.9 565.5v-6.2h2v6.2zM484.5 565.5v-4.0h2v4.0zM512.4 565.5v-3.8h2v3.8zM527.6 565.5v-2.2h2v2.2zM530.1 565.5v-3.5h2v3.5zM532.6 565.5v-4.1h2v4.1zM535.2 565.5v-17.0h2v17.0zM537.7 565.5v-3.6h2v3.6zM540.3 565.5v-9.0h2v9.0zM542.8 565.5v-1.4h2v1.4zM545.3 565.5v-1.9h2v1.9zM558.0 565.5v-2.1h2v2.1zM560.5 565.5v-13.0h2v13.0zM563.1 565.5v-3.6h2v3.6zM565.6 565.5v-1.9h2v1.9zM568.1 565.5v-2.4h2v2.4zM570.7 565.5v-3.4h2v3.4zM573.2 565.5v-3.9h2v3.9zM578.3 565.5v-0.9h2v0.9zM580.8 565.5v-2.0h2v2.0zM583.4 565.5v-1.6h2v1.6zM585.9 565.5v-3.4h2v3.4zM598.6 565.5v-2.1h2v2.1zM601.1 565.5v-1.4h2v1.4zM608.7 565.5v-2.5h2v2.5zM611.3 565.5v-2.8h2v2.8zM644.2 565.5v-8.4h2v8.4zM649.3 565.5v-6.7h2v6.7zM656.9 565.5v-1.6h2v1.6zM664.5 565.5v-3.6h2v3.6zM677.2 565.5v-3.0h2v3.0zM694.9 565.5v-9.3h2v9.3zM697.5 565.5v-6.5h2v6.5zM700.0 565.5v-9.6h2v9.6zM705.1 565.5v-7.2h2v7.2zM707.6 565.5v-8.5h2v8.5zM710.2 565.5v-7.0h2v7.0zM715.2 565.5v-3.9h2v3.9zM725.4 565.5v-3.6h2v3.6zM768.5 565.5v-3.1h2v3.1zM773.6 565.5v-1.3h2v1.3zM788.8 565.5v-8.0h2v8.0zM791.3 565.5v-12.0h2v12.0zM793.9 565.5v-10.0h2v10.0zM796.4 565.5v-0.9h2v0.9zM798.9 565.5v-4.1h2v4.1zM804.0 565.5v-2.9h2v2.9zM806.5 565.5v-4.1h2v4.1zM809.1 565.5v-8.0h2v8.0zM811.6 565.5v-7.2h2v7.2zM814.1 565.5v-5.1h2v5.1zM816.7 565.5v-1.0h2v1.0zM819.2 565.5v-5.1h2v5.1zM821.7 565.5v-5.2h2v5.2zM824.3 565.5v-3.4h2v3.4zM826.8 565.5v-3.6h2v3.6zM847.1 565.5v-4.2h2v4.2zM849.6 565.5v-4.1h2v4.1zM852.2 565.5v-1.5h2v1.5zM854.7 565.5v-9.3h2v9.3zM857.3 565.5v-8.7h2v8.7zM859.8 565.5v-7.6h2v7.6zM862.3 565.5v-3.8h2v3.8zM864.9 565.5v-2.3h2v2.3zM867.4 565.5v-13.0h2v13.0zM872.5 565.5v-13.0h2v13.0zM875.0 565.5v-3.6h2v3.6zM877.5 565.5v-1.7h2v1.7zM887.7 565.5v-2.6h2v2.6zM890.2 565.5v-27.0h2v27.0zM892.8 565.5v-12.0h2v12.0zM895.3 565.5v-2.6h2v2.6zM905.4 565.5v-7.8h2v7.8zM910.5 565.5v-16.6h2v16.6zM928.3 565.5v-11.8h2v11.8zM961.2 565.5v-12.3h2v12.3zM971.4 565.5v-16.0h2v16.0zM973.9 565.5v-18.2h2v18.2zM976.4 565.5v-14.7h2v14.7zM989.1 565.5v-11.4h2v11.4zM991.7 565.5v-4.4h2v4.4zM1004.3 565.5v-6.4h2v6.4zM1011.9 565.5v-15.2h2v15.2zM1014.5 565.5v-15.8h2v15.8zM1017.0 565.5v-11.7h2v11.7zM1019.6 565.5v-5.9h2v5.9zM1022.1 565.5v-6.2h2v6.2zM1024.6 565.5v-6.4h2v6.4zM1027.2 565.5v-5.8h2v5.8zM1029.7 565.5v-17.2h2v17.2zM1032.2 565.5v-4.3h2v4.3zM1034.8 565.5v-7.3h2v7.3zM1037.3 565.5v-21.0h2v21.0zM1042.4 565.5v-6.4h2v6.4zM1044.9 565.5v-4.2h2v4.2zM1050.0 565.5v-8.0h2v8.0zM1052.5 565.5v-7.9h2v7.9zM1075.3 565.5v-2.5h2v2.5zM1083.0 565.5v-22.8h2v22.8zM1085.5 565.5v-6.1h2v6.1zM1088.0 565.5v-19.6h2v19.6zM1090.6 565.5v-5.8h2v5.8zM1093.1 565.5v-14.9h2v14.9zM1095.6 565.5v-22.0h2v22.0zM1100.7 565.5v-6.7h2v6.7zM1108.3 565.5v-8.1h2v8.1zM1131.1 565.5v-4.7h2v4.7zM1133.7 565.5v-5.0h2v5.0zM1136.2 565.5v-18.0h2v18.0zM1141.3 565.5v-6.2h2v6.2zM1174.3 565.5v-8.9h2v8.9zM1176.8 565.5v-6.5h2v6.5zM1179.3 565.5v-11.1h2v11.1zM1181.9 565.5v-20.1h2v20.1zM1194.5 565.5v-8.8h2v8.8zM1202.1 565.5v-7.9h2v7.9zM1209.8 565.5v-11.9h2v11.9zM1212.3 565.5v-11.4h2v11.4zM1214.8 565.5v-24.0h2v24.0zM1217.4 565.5v-12.0h2v12.0zM1219.9 565.5v-3.8h2v3.8zM1232.6 565.5v-4.1h2v4.1zM1245.3 565.5v-5.0h2v5.0zM1247.8 565.5v-6.6h2v6.6zM1252.9 565.5v-23.0h2v23.0zM1255.4 565.5v-8.9h2v8.9zM1257.9 565.5v-3.5h2v3.5zM1260.5 565.5v-5.9h2v5.9zM1263.0 565.5v-16.5h2v16.5zM1273.2 565.5v-15.0h2v15.0zM1278.2 565.5v-5.1h2v5.1zM1280.8 565.5v-2.2h2v2.2zM1288.4 565.5v-10.1h2v10.1zM1296.0 565.5v-20.0h2v20.0zM1306.1 565.5v-22.0h2v22.0zM1308.7 565.5v-15.0h2v15.0zM1311.2 565.5v-13.0h2v13.0zM1313.7 565.5v-16.0h2v16.0z" fill="#de3a22"/>
<path d="M885.1 565.5v-49.0h2v49.0zM968.8 565.5v-33.0h2v33.0zM1062.7 565.5v-61.0h2v61.0zM1098.2 565.5v-51.0h2v51.0zM1143.8 565.5v-66.0h2v66.0z" fill="#b32f28"/>
<path d="M48.3 565.5v-2.1h2v2.1zM50.8 565.5v-1.2h2v1.2zM53.3 565.5v-6.9h2v6.9zM58.4 565.5v-7.5h2v7.5zM60.9 565.5v-6.8h2v6.8zM63.5 565.5v-5.9h2v5.9zM68.6 565.5v-6.4h2v6.4zM83.8 565.5v-3.3h2v3.3zM91.4 565.5v-3.6h2v3.6zM104.1 565.5v-1.7h2v1.7zM109.1 565.5v-1.1h2v1.1zM111.7 565.5v-3.2h2v3.2zM114.2 565.5v-17.0h2v17.0zM116.7 565.5v-3.1h2v3.1zM124.3 565.5v-4.5h2v4.5zM126.9 565.5v-4.4h2v4.4zM129.4 565.5v-3.6h2v3.6zM132.0 565.5v-1.7h2v1.7zM134.5 565.5v-2.5h2v2.5zM137.0 565.5v-4.1h2v4.1zM142.1 565.5v-0.9h2v0.9zM144.6 565.5v-2.3h2v2.3zM152.2 565.5v-2.8h2v2.8zM154.8 565.5v-3.7h2v3.7zM157.3 565.5v-17.0h2v17.0zM162.4 565.5v-2.7h2v2.7zM170.0 565.5v-9.4h2v9.4zM172.5 565.5v-5.9h2v5.9zM175.1 565.5v-8.3h2v8.3zM182.7 565.5v-1.1h2v1.1zM190.3 565.5v-2.2h2v2.2zM192.8 565.5v-3.6h2v3.6zM197.9 565.5v-1.7h2v1.7zM200.4 565.5v-1.7h2v1.7zM203.0 565.5v-7.1h2v7.1zM205.5 565.5v-3.7h2v3.7zM210.6 565.5v-2.1h2v2.1zM213.1 565.5v-2.8h2v2.8zM215.6 565.5v-1.5h2v1.5zM218.2 565.5v-1.0h2v1.0zM223.3 565.5v-1.7h2v1.7zM225.8 565.5v-3.2h2v3.2zM228.3 565.5v-2.3h2v2.3zM241.0 565.5v-14.0h2v14.0zM243.5 565.5v-12.0h2v12.0zM246.1 565.5v-1.3h2v1.3zM248.6 565.5v-11.0h2v11.0zM261.3 565.5v-3.4h2v3.4zM274.0 565.5v-1.8h2v1.8zM276.5 565.5v-1.5h2v1.5zM286.7 565.5v-0.9h2v0.9zM289.2 565.5v-3.9h2v3.9zM291.7 565.5v-1.8h2v1.8zM294.3 565.5v-1.5h2v1.5zM299.3 565.5v-1.8h2v1.8zM327.2 565.5v-3.8h2v3.8zM329.8 565.5v-17.0h2v17.0zM332.3 565.5v-5.8h2v5.8zM334.8 565.5v-11.2h2v11.2zM337.4 565.5v-1.2h2v1.2zM339.9 565.5v-1.2h2v1.2zM357.7 565.5v-7.8h2v7.8zM370.3 565.5v-9.6h2v9.6zM393.2 565.5v-5.0h2v5.0zM395.7 565.5v-9.7h2v9.7zM398.2 565.5v-9.4h2v9.4zM403.3 565.5v-9.9h2v9.9zM408.4 565.5v-7.5h2v7.5zM410.9 565.5v-10.5h2v10.5zM413.5 565.5v-3.1h2v3.1zM416.0 565.5v-3.6h2v3.6zM418.5 565.5v-3.3h2v3.3zM421.1 565.5v-2.8h2v2.8zM423.6 565.5v-3.5h2v3.5zM451.5 565.5v-16.0h2v16.0zM454.0 565.5v-2.2h2v2.2zM456.6 565.5v-1.9h2v1.9zM459.1 565.5v-3.7h2v3.7zM464.2 565.5v-2.3h2v2.3zM479.4 565.5v-4.2h2v4.2zM487.0 565.5v-1.7h2v1.7zM489.5 565.5v-2.7h2v2.7zM492.1 565.5v-2.1h2v2.1zM494.6 565.5v-3.1h2v3.1zM497.1 565.5v-2.3h2v2.3zM499.7 565.5v-3.0h2v3.0zM502.2 565.5v-2.6h2v2.6zM504.7 565.5v-2.5h2v2.5zM507.3 565.5v-1.0h2v1.0zM509.8 565.5v-12.0h2v12.0zM514.9 565.5v-0.9h2v0.9zM517.4 565.5v-4.0h2v4.0zM520.0 565.5v-7.7h2v7.7zM522.5 565.5v-3.3h2v3.3zM525.0 565.5v-3.4h2v3.4zM547.9 565.5v-21.0h2v21.0zM550.4 565.5v-1.4h2v1.4zM552.9 565.5v-1.5h2v1.5zM555.5 565.5v-15.0h2v15.0zM575.8 565.5v-2.9h2v2.9zM588.4 565.5v-3.5h2v3.5zM591.0 565.5v-3.0h2v3.0zM593.5 565.5v-3.2h2v3.2zM596.0 565.5v-11.0h2v11.0zM603.7 565.5v-2.6h2v2.6zM606.2 565.5v-7.9h2v7.9zM613.8 565.5v-1.7h2v1.7zM616.3 565.5v-3.7h2v3.7zM618.9 565.5v-3.4h2v3.4zM621.4 565.5v-3.9h2v3.9zM623.9 565.5v-3.0h2v3.0zM626.5 565.5v-3.2h2v3.2zM629.0 565.5v-1.7h2v1.7zM631.5 565.5v-3.6h2v3.6zM634.1 565.5v-1.6h2v1.6zM636.6 565.5v-4.1h2v4.1zM639.2 565.5v-3.2h2v3.2zM641.7 565.5v-7.7h2v7.7zM646.8 565.5v-6.9h2v6.9zM651.8 565.5v-2.4h2v2.4zM654.4 565.5v-4.0h2v4.0zM659.4 565.5v-1.8h2v1.8zM662.0 565.5v-3.2h2v3.2zM667.1 565.5v-5.8h2v5.8zM669.6 565.5v-2.1h2v2.1zM672.1 565.5v-7.6h2v7.6zM674.7 565.5v-2.6h2v2.6zM679.7 565.5v-4.1h2v4.1zM682.3 565.5v-1.4h2v1.4zM684.8 565.5v-11.3h2v11.3zM687.3 565.5v-0.9h2v0.9zM689.9 565.5v-3.3h2v3.3zM692.4 565.5v-3.4h2v3.4zM702.6 565.5v-8.5h2v8.5zM712.7 565.5v-17.0h2v17.0zM717.8 565.5v-1.1h2v1.1zM720.3 565.5v-3.4h2v3.4zM722.8 565.5v-3.9h2v3.9zM727.9 565.5v-2.7h2v2.7zM730.5 565.5v-9.3h2v9.3zM733.0 565.5v-10.1h2v10.1zM735.5 565.5v-8.9h2v8.9zM738.1 565.5v-9.3h2v9.3zM740.6 565.5v-6.5h2v6.5zM743.1 565.5v-10.8h2v10.8zM745.7 565.5v-11.2h2v11.2zM748.2 565.5v-2.6h2v2.6zM750.7 565.5v-2.9h2v2.9zM753.3 565.5v-3.0h2v3.0zM755.8 565.5v-3.9h2v3.9zM758.3 565.5v-2.8h2v2.8zM760.9 565.5v-2.4h2v2.4zM763.4 565.5v-10.1h2v10.1zM766.0 565.5v-1.0h2v1.0zM771.0 565.5v-3.0h2v3.0zM776.1 565.5v-20.0h2v20.0zM778.6 565.5v-1.6h2v1.6zM781.2 565.5v-3.6h2v3.6zM783.7 565.5v-0.9h2v0.9zM786.2 565.5v-7.4h2v7.4zM801.5 565.5v-1.1h2v1.1zM829.4 565.5v-2.3h2v2.3zM831.9 565.5v-10.1h2v10.1zM834.4 565.5v-3.7h2v3.7zM837.0 565.5v-2.0h2v2.0zM839.5 565.5v-1.3h2v1.3zM842.0 565.5v-5.3h2v5.3zM844.6 565.5v-5.2h2v5.2zM869.9 565.5v-1.1h2v1.1zM880.1 565.5v-0.9h2v0.9zM882.6 565.5v-3.9h2v3.9zM897.8 565.5v-4.0h2v4.0zM900.4 565.5v-11.7h2v11.7zM902.9 565.5v-11.5h2v11.5zM908.0 565.5v-14.0h2v14.0zM913.0 565.5v-20.2h2v20.2zM915.6 565.5v-16.1h2v16.1zM918.1 565.5v-9.3h2v9.3zM920.7 565.5v-6.9h2v6.9zM923.2 565.5v-7.1h2v7.1zM925.7 565.5v-7.1h2v7.1zM930.8 565.5v-21.9h2v21.9zM933.3 565.5v-12.6h2v12.6zM935.9 565.5v-7.4h2v7.4zM938.4 565.5v-7.8h2v7.8zM940.9 565.5v-17.4h2v17.4zM943.5 565.5v-7.3h2v7.3zM946.0 565.5v-17.4h2v17.4zM948.5 565.5v-12.6h2v12.6zM951.1 565.5v-10.1h2v10.1zM953.6 565.5v-9.2h2v9.2zM956.2 565.5v-4.5h2v4.5zM958.7 565.5v-8.7h2v8.7zM963.8 565.5v-5.7h2v5.7zM966.3 565.5v-6.7h2v6.7zM979.0 565.5v-22.0h2v22.0zM981.5 565.5v-14.0h2v14.0zM984.1 565.5v-16.8h2v16.8zM986.6 565.5v-18.4h2v18.4zM994.2 565.5v-4.3h2v4.3zM996.7 565.5v-13.4h2v13.4zM999.3 565.5v-6.3h2v6.3zM1001.8 565.5v-8.2h2v8.2zM1006.9 565.5v-4.4h2v4.4zM1009.4 565.5v-6.1h2v6.1zM1039.8 565.5v-4.6h2v4.6zM1047.5 565.5v-6.0h2v6.0zM1055.1 565.5v-6.5h2v6.5zM1057.6 565.5v-11.0h2v11.0zM1060.1 565.5v-20.3h2v20.3zM1065.2 565.5v-14.2h2v14.2zM1067.7 565.5v-15.8h2v15.8zM1070.3 565.5v-5.2h2v5.2zM1072.8 565.5v-7.3h2v7.3zM1077.9 565.5v-5.4h2v5.4zM1080.4 565.5v-7.4h2v7.4zM1103.2 565.5v-4.3h2v4.3zM1105.8 565.5v-9.7h2v9.7zM1110.9 565.5v-5.3h2v5.3zM1113.4 565.5v-3.5h2v3.5zM1115.9 565.5v-8.5h2v8.5zM1118.5 565.5v-17.4h2v17.4zM1121.0 565.5v-12.3h2v12.3zM1123.5 565.5v-4.0h2v4.0zM1126.1 565.5v-6.8h2v6.8zM1128.6 565.5v-3.5h2v3.5zM1138.7 565.5v-6.3h2v6.3zM1146.4 565.5v-8.1h2v8.1zM1148.9 565.5v-11.7h2v11.7zM1151.4 565.5v-8.0h2v8.0zM1154.0 565.5v-9.9h2v9.9zM1156.5 565.5v-4.3h2v4.3zM1159.0 565.5v-4.2h2v4.2zM1161.6 565.5v-6.9h2v6.9zM1164.1 565.5v-4.2h2v4.2zM1166.6 565.5v-6.3h2v6.3zM1169.2 565.5v-3.0h2v3.0zM1171.7 565.5v-8.1h2v8.1zM1184.4 565.5v-7.0h2v7.0zM1186.9 565.5v-5.7h2v5.7zM1189.5 565.5v-16.1h2v16.1zM1192.0 565.5v-2.5h2v2.5zM1197.1 565.5v-13.0h2v13.0zM1199.6 565.5v-3.7h2v3.7zM1204.7 565.5v-14.2h2v14.2zM1207.2 565.5v-16.1h2v16.1zM1222.4 565.5v-19.6h2v19.6zM1225.0 565.5v-3.4h2v3.4zM1227.5 565.5v-6.0h2v6.0zM1230.0 565.5v-3.0h2v3.0zM1235.1 565.5v-7.8h2v7.8zM1237.7 565.5v-3.9h2v3.9zM1240.2 565.5v-8.3h2v8.3zM1242.7 565.5v-3.9h2v3.9zM1250.3 565.5v-5.6h2v5.6zM1265.5 565.5v-13.6h2v13.6zM1268.1 565.5v-14.7h2v14.7zM1270.6 565.5v-18.2h2v18.2zM1275.7 565.5v-20.0h2v20.0zM1283.3 565.5v-9.7h2v9.7zM1285.8 565.5v-6.4h2v6.4zM1290.9 565.5v-30.0h2v30.0zM1293.4 565.5v-41.0h2v41.0zM1298.5 565.5v-26.0h2v26.0zM1301.1 565.5v-35.0h2v35.0zM1303.6 565.5v-13.0h2v13.0z" fill="#3cc865"/>
<rect x="50.0" y="602.0" width="1269" height="34" fill="#546372" stroke="#c0cedb" stroke-width="2"/>
<rect x="46.0" y="612.0" width="8" height="15" rx="1" fill="#b9c7d5"/>
<path d="M48.5 616.0h3M48.5 622.5h3" stroke="#5d6c7c" stroke-width="1.4"/>
<rect x="1315.0" y="612.0" width="8" height="15" rx="1" fill="#b9c7d5"/>
<path d="M1317.5 616.0h3M1317.5 622.5h3" stroke="#5d6c7c" stroke-width="1.4"/>
<rect x="454.0" y="657.0" width="29" height="16" rx="3" fill="#17c24d"/>
<text x="490.0" y="670.0" font-size="14.5" fill="#4f5d6b" stroke="#4f5d6b" stroke-width="0.3" letter-spacing="0.35">Dow-Jones index</text>
<path d="M621.0 665.0h28" stroke="#c23531" stroke-width="1.4" opacity="0.55"/>
<circle cx="635.0" cy="665.0" r="6" fill="#fdfdfd" stroke="#c23531" stroke-width="1" stroke-opacity="0.5"/>
<text x="657.0" y="670.0" font-size="14.5" fill="#4f5d6b" stroke="#4f5d6b" stroke-width="0.3" letter-spacing="0.3">MA5</text>
<path d="M702.0 665.0h28" stroke="#2f4554" stroke-width="1.4" opacity="0.55"/>
<circle cx="716.0" cy="665.0" r="6" fill="#fdfdfd" stroke="#2f4554" stroke-width="1" stroke-opacity="0.5"/>
<text x="738.0" y="670.0" font-size="14.5" fill="#4f5d6b" stroke="#4f5d6b" stroke-width="0.3" letter-spacing="0.3">MA10</text>
<path d="M792.0 665.0h28" stroke="#7aa6c2" stroke-width="1.4" opacity="0.55"/>
<circle cx="806.0" cy="665.0" r="6" fill="#fdfdfd" stroke="#7aa6c2" stroke-width="1" stroke-opacity="0.5"/>
<text x="828.0" y="670.0" font-size="14.5" fill="#4f5d6b" stroke="#4f5d6b" stroke-width="0.3" letter-spacing="0.3">MA20</text>
<path d="M882.0 665.0h28" stroke="#d9926f" stroke-width="1.4" opacity="0.55"/>
<circle cx="896.0" cy="665.0" r="6" fill="#fdfdfd" stroke="#d9926f" stroke-width="1" stroke-opacity="0.5"/>
<text x="917.0" y="670.0" font-size="14.5" fill="#4f5d6b" stroke="#4f5d6b" stroke-width="0.3" letter-spacing="0.3">MA30</text>
</svg>

</div>
<div class="panel" style="left:479px;top:775px;width:942px;height:300px">
<div class="t w" style="left:18px;top:32.0px;">Limit Order</div>
<div class="abs" style="left:0;top:66px;width:120px;height:2px;background:#e8edf2"></div>
<div class="t " style="left:142px;top:32.0px;color:#7c8794">Market Order</div>
<div class="t " style="left:823px;top:31.0px;color:#d5dce4;font-size:15.7px">Fees = 0.2%</div>
<div class="t blue" style="left:38px;top:92.0px;font-size:15.65px">Available 10000 USDT</div>
<div class="t blue" style="left:494px;top:92.0px;font-size:15.65px">Available 0.0 BTC</div>
<div class="t dim" style="left:38px;top:143.0px;font-size:15.7px">Price</div>
<div class="t dim" style="left:494px;top:143.0px;font-size:15.7px">Price</div>
<div class="inp" style="left:38px;top:174px;width:401px"><span style="left:15px">7354</span><span style="right:15px">USDT</span></div>
<div class="inp" style="left:494px;top:174px;width:401px"><span style="left:15px">7351.93</span><span style="right:15px">USDT</span></div>
<div class="t dim" style="left:38px;top:243.0px;font-size:15.9px">Amount</div>
<div class="t dim" style="left:494px;top:243.0px;font-size:15.9px">Amount</div>
<div class="inp" style="left:38px;top:275px;width:401px"></div>
<div class="inp" style="left:494px;top:275px;width:401px"></div>
</div>
<div class="panel" style="left:1433px;top:775px;width:458px;height:300px">
<div class="t r dim" style="right:194px;top:8.0px;">Price (USDT)</div>
<div class="t r dim" style="right:6px;top:8.0px;">Amount(BTC)</div>
<div class="t " style="left:23px;top:39.0px;color:#d2604f">Sell 7</div>
<div class="t r " style="right:194px;top:39.0px;color:#d5dce4">7358</div>
<div class="t r " style="right:6px;top:39.0px;color:#d5dce4">0.0528</div>
<div class="t " style="left:23px;top:65.4px;color:#d2604f">Sell 6</div>
<div class="t r " style="right:194px;top:65.4px;color:#d5dce4">7357.99</div>
<div class="t r " style="right:6px;top:65.4px;color:#d5dce4">0.05</div>
<div class="t " style="left:23px;top:91.8px;color:#d2604f">Sell 5</div>
<div class="t r " style="right:194px;top:91.8px;color:#d5dce4">7357.98</div>
<div class="t r " style="right:6px;top:91.8px;color:#d5dce4">0.0762</div>
<div class="t " style="left:23px;top:118.2px;color:#d2604f">Sell 4</div>
<div class="t r " style="right:194px;top:118.2px;color:#d5dce4">7357.5</div>
<div class="t r " style="right:6px;top:118.2px;color:#d5dce4">0.00136</div>
<div class="t " style="left:23px;top:144.6px;color:#d2604f">Sell 3</div>
<div class="t r " style="right:194px;top:144.6px;color:#d5dce4">7357.01</div>
<div class="t r " style="right:6px;top:144.6px;color:#d5dce4">0.00239</div>
<div class="t " style="left:23px;top:171.0px;color:#d2604f">Sell 2</div>
<div class="t r " style="right:194px;top:171.0px;color:#d5dce4">7356.3</div>
<div class="t r " style="right:6px;top:171.0px;color:#d5dce4">0.05</div>
<div class="t " style="left:23px;top:197.4px;color:#d2604f">Sell 1</div>
<div class="t r " style="right:194px;top:197.4px;color:#d5dce4">7356.2</div>
<div class="t r " style="right:6px;top:197.4px;color:#d5dce4">0.00463</div>
<div class="t " style="left:23px;top:237.0px;color:#5cb860">Buy 1</div>
<div class="t r " style="right:194px;top:237.0px;color:#d5dce4">7352.06</div>
<div class="t r " style="right:6px;top:237.0px;color:#d5dce4">0.48938</div>
<div class="t " style="left:23px;top:263.4px;color:#5cb860">Buy 2</div>
<div class="t r " style="right:194px;top:263.4px;color:#d5dce4">7352.05</div>
<div class="t r " style="right:6px;top:263.4px;color:#d5dce4">2</div>
</div>
</div>
<!-- scrollbars -->
<div class="abs" style="left:1900px;top:0;width:20px;height:1080px;background:#f1f1f1;border-left:3px solid #fdfdfd"></div>
<div class="abs" style="left:0;top:1059px;width:1920px;height:21px;background:#f1f1f1;border-top:3px solid #fdfdfd"></div>
<div class="abs" style="left:1902px;top:20px;width:15px;height:438px;background:#c1c2c0"></div>
<div class="abs" style="left:20px;top:1062px;width:1851px;height:15px;background:#c1c2c0"></div>
<svg class="abs" style="left:1902px;top:0" width="18" height="20"><path d="M4.5 13 L9 8 L13.500 13z" fill="#a3a3a3"/></svg>
<svg class="abs" style="left:1902px;top:1040px" width="18" height="20"><path d="M4.5 7 L9 12 L13.500 7z" fill="#505050"/></svg>
<svg class="abs" style="left:0;top:1062px" width="20" height="16"><path d="M12 3.500 L7 8 L12 12.500z" fill="#a3a3a3"/></svg>
<svg class="abs" style="left:1880px;top:1062px" width="20" height="16"><path d="M8 3.500 L13 8 L8 12.500z" fill="#505050"/></svg>
<div class="abs" style="left:1900px;top:1060px;width:20px;height:20px;background:#f1f1f1"></div>
</body>
</html>
